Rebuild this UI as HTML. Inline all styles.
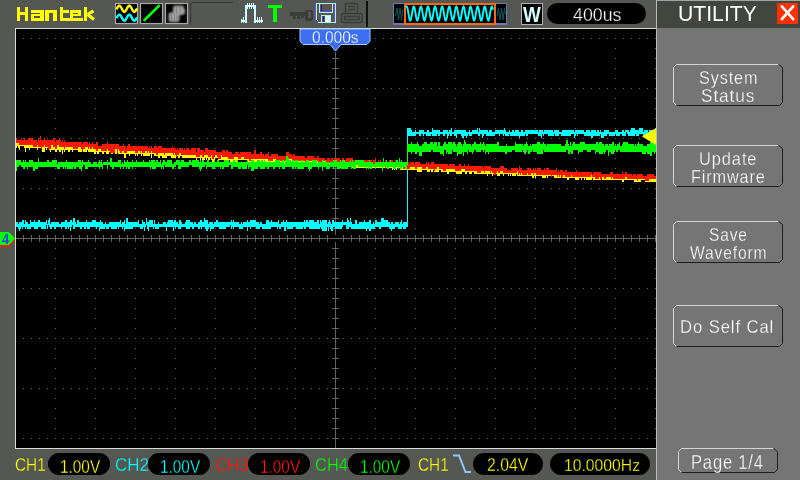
<!DOCTYPE html>
<html><head><meta charset="utf-8">
<style>
html,body{margin:0;padding:0}
body{width:800px;height:480px;overflow:hidden;position:relative;background:#555753;font-family:"Liberation Sans",sans-serif}
.a{position:absolute}
svg{position:absolute;left:0;top:0}
.pill{position:absolute;background:#000;border-radius:12px}
.lbl{position:absolute;font-size:15px;line-height:15px;white-space:nowrap}
.val{position:absolute;font-size:15px;line-height:15px;white-space:nowrap;text-align:center}
.btn{position:absolute;left:673px;width:110px;height:42px;box-sizing:border-box;border-top:1px solid #ccc;border-left:1px solid #ccc;border-right:2px solid #222;border-bottom:2px solid #222;border-radius:4px}
.t{position:absolute;line-height:1;white-space:nowrap;transform-origin:0 0}
</style></head><body>
<svg width="800" height="480" viewBox="0 0 800 480" shape-rendering="crispEdges"><defs><filter id="blur1" x="-50%" y="-50%" width="200%" height="200%"><feGaussianBlur stdDeviation="0.8"/></filter></defs>
<!-- screen -->
<rect x="16" y="29" width="640" height="419" fill="#000"/>
<rect x="15" y="28" width="641" height="1" fill="#d8d8d8"/>
<rect x="15" y="28" width="1" height="421" fill="#d8d8d8"/>
<rect x="15" y="448" width="641" height="1" fill="#d8d8d8"/>
<rect x="656" y="0" width="1" height="480" fill="#b8b8b8"/>
<!-- right panel -->
<rect x="657" y="0" width="143" height="28" fill="#42463f"/>
<rect x="657" y="28" width="143" height="452" fill="#757575"/>
<path fill="#686b68" d="M23 38h1v1h-1zM31 38h1v1h-1zM39 38h1v1h-1zM47 38h1v1h-1zM55 38h1v1h-1zM63 38h1v1h-1zM71 38h1v1h-1zM79 38h1v1h-1zM87 38h1v1h-1zM95 38h1v1h-1zM103 38h1v1h-1zM111 38h1v1h-1zM119 38h1v1h-1zM127 38h1v1h-1zM135 38h1v1h-1zM143 38h1v1h-1zM151 38h1v1h-1zM159 38h1v1h-1zM167 38h1v1h-1zM175 38h1v1h-1zM183 38h1v1h-1zM191 38h1v1h-1zM199 38h1v1h-1zM207 38h1v1h-1zM215 38h1v1h-1zM223 38h1v1h-1zM231 38h1v1h-1zM239 38h1v1h-1zM247 38h1v1h-1zM255 38h1v1h-1zM263 38h1v1h-1zM271 38h1v1h-1zM279 38h1v1h-1zM287 38h1v1h-1zM295 38h1v1h-1zM303 38h1v1h-1zM311 38h1v1h-1zM319 38h1v1h-1zM327 38h1v1h-1zM335 38h1v1h-1zM343 38h1v1h-1zM351 38h1v1h-1zM359 38h1v1h-1zM367 38h1v1h-1zM375 38h1v1h-1zM383 38h1v1h-1zM391 38h1v1h-1zM399 38h1v1h-1zM407 38h1v1h-1zM415 38h1v1h-1zM423 38h1v1h-1zM431 38h1v1h-1zM439 38h1v1h-1zM447 38h1v1h-1zM455 38h1v1h-1zM463 38h1v1h-1zM471 38h1v1h-1zM479 38h1v1h-1zM487 38h1v1h-1zM495 38h1v1h-1zM503 38h1v1h-1zM511 38h1v1h-1zM519 38h1v1h-1zM527 38h1v1h-1zM535 38h1v1h-1zM543 38h1v1h-1zM551 38h1v1h-1zM559 38h1v1h-1zM567 38h1v1h-1zM575 38h1v1h-1zM583 38h1v1h-1zM591 38h1v1h-1zM599 38h1v1h-1zM607 38h1v1h-1zM615 38h1v1h-1zM623 38h1v1h-1zM631 38h1v1h-1zM639 38h1v1h-1zM647 38h1v1h-1zM655 38h1v1h-1zM23 88h1v1h-1zM31 88h1v1h-1zM39 88h1v1h-1zM47 88h1v1h-1zM55 88h1v1h-1zM63 88h1v1h-1zM71 88h1v1h-1zM79 88h1v1h-1zM87 88h1v1h-1zM95 88h1v1h-1zM103 88h1v1h-1zM111 88h1v1h-1zM119 88h1v1h-1zM127 88h1v1h-1zM135 88h1v1h-1zM143 88h1v1h-1zM151 88h1v1h-1zM159 88h1v1h-1zM167 88h1v1h-1zM175 88h1v1h-1zM183 88h1v1h-1zM191 88h1v1h-1zM199 88h1v1h-1zM207 88h1v1h-1zM215 88h1v1h-1zM223 88h1v1h-1zM231 88h1v1h-1zM239 88h1v1h-1zM247 88h1v1h-1zM255 88h1v1h-1zM263 88h1v1h-1zM271 88h1v1h-1zM279 88h1v1h-1zM287 88h1v1h-1zM295 88h1v1h-1zM303 88h1v1h-1zM311 88h1v1h-1zM319 88h1v1h-1zM327 88h1v1h-1zM335 88h1v1h-1zM343 88h1v1h-1zM351 88h1v1h-1zM359 88h1v1h-1zM367 88h1v1h-1zM375 88h1v1h-1zM383 88h1v1h-1zM391 88h1v1h-1zM399 88h1v1h-1zM407 88h1v1h-1zM415 88h1v1h-1zM423 88h1v1h-1zM431 88h1v1h-1zM439 88h1v1h-1zM447 88h1v1h-1zM455 88h1v1h-1zM463 88h1v1h-1zM471 88h1v1h-1zM479 88h1v1h-1zM487 88h1v1h-1zM495 88h1v1h-1zM503 88h1v1h-1zM511 88h1v1h-1zM519 88h1v1h-1zM527 88h1v1h-1zM535 88h1v1h-1zM543 88h1v1h-1zM551 88h1v1h-1zM559 88h1v1h-1zM567 88h1v1h-1zM575 88h1v1h-1zM583 88h1v1h-1zM591 88h1v1h-1zM599 88h1v1h-1zM607 88h1v1h-1zM615 88h1v1h-1zM623 88h1v1h-1zM631 88h1v1h-1zM639 88h1v1h-1zM647 88h1v1h-1zM655 88h1v1h-1zM23 138h1v1h-1zM31 138h1v1h-1zM39 138h1v1h-1zM47 138h1v1h-1zM55 138h1v1h-1zM63 138h1v1h-1zM71 138h1v1h-1zM79 138h1v1h-1zM87 138h1v1h-1zM95 138h1v1h-1zM103 138h1v1h-1zM111 138h1v1h-1zM119 138h1v1h-1zM127 138h1v1h-1zM135 138h1v1h-1zM143 138h1v1h-1zM151 138h1v1h-1zM159 138h1v1h-1zM167 138h1v1h-1zM175 138h1v1h-1zM183 138h1v1h-1zM191 138h1v1h-1zM199 138h1v1h-1zM207 138h1v1h-1zM215 138h1v1h-1zM223 138h1v1h-1zM231 138h1v1h-1zM239 138h1v1h-1zM247 138h1v1h-1zM255 138h1v1h-1zM263 138h1v1h-1zM271 138h1v1h-1zM279 138h1v1h-1zM287 138h1v1h-1zM295 138h1v1h-1zM303 138h1v1h-1zM311 138h1v1h-1zM319 138h1v1h-1zM327 138h1v1h-1zM335 138h1v1h-1zM343 138h1v1h-1zM351 138h1v1h-1zM359 138h1v1h-1zM367 138h1v1h-1zM375 138h1v1h-1zM383 138h1v1h-1zM391 138h1v1h-1zM399 138h1v1h-1zM407 138h1v1h-1zM415 138h1v1h-1zM423 138h1v1h-1zM431 138h1v1h-1zM439 138h1v1h-1zM447 138h1v1h-1zM455 138h1v1h-1zM463 138h1v1h-1zM471 138h1v1h-1zM479 138h1v1h-1zM487 138h1v1h-1zM495 138h1v1h-1zM503 138h1v1h-1zM511 138h1v1h-1zM519 138h1v1h-1zM527 138h1v1h-1zM535 138h1v1h-1zM543 138h1v1h-1zM551 138h1v1h-1zM559 138h1v1h-1zM567 138h1v1h-1zM575 138h1v1h-1zM583 138h1v1h-1zM591 138h1v1h-1zM599 138h1v1h-1zM607 138h1v1h-1zM615 138h1v1h-1zM623 138h1v1h-1zM631 138h1v1h-1zM639 138h1v1h-1zM647 138h1v1h-1zM655 138h1v1h-1zM23 188h1v1h-1zM31 188h1v1h-1zM39 188h1v1h-1zM47 188h1v1h-1zM55 188h1v1h-1zM63 188h1v1h-1zM71 188h1v1h-1zM79 188h1v1h-1zM87 188h1v1h-1zM95 188h1v1h-1zM103 188h1v1h-1zM111 188h1v1h-1zM119 188h1v1h-1zM127 188h1v1h-1zM135 188h1v1h-1zM143 188h1v1h-1zM151 188h1v1h-1zM159 188h1v1h-1zM167 188h1v1h-1zM175 188h1v1h-1zM183 188h1v1h-1zM191 188h1v1h-1zM199 188h1v1h-1zM207 188h1v1h-1zM215 188h1v1h-1zM223 188h1v1h-1zM231 188h1v1h-1zM239 188h1v1h-1zM247 188h1v1h-1zM255 188h1v1h-1zM263 188h1v1h-1zM271 188h1v1h-1zM279 188h1v1h-1zM287 188h1v1h-1zM295 188h1v1h-1zM303 188h1v1h-1zM311 188h1v1h-1zM319 188h1v1h-1zM327 188h1v1h-1zM335 188h1v1h-1zM343 188h1v1h-1zM351 188h1v1h-1zM359 188h1v1h-1zM367 188h1v1h-1zM375 188h1v1h-1zM383 188h1v1h-1zM391 188h1v1h-1zM399 188h1v1h-1zM407 188h1v1h-1zM415 188h1v1h-1zM423 188h1v1h-1zM431 188h1v1h-1zM439 188h1v1h-1zM447 188h1v1h-1zM455 188h1v1h-1zM463 188h1v1h-1zM471 188h1v1h-1zM479 188h1v1h-1zM487 188h1v1h-1zM495 188h1v1h-1zM503 188h1v1h-1zM511 188h1v1h-1zM519 188h1v1h-1zM527 188h1v1h-1zM535 188h1v1h-1zM543 188h1v1h-1zM551 188h1v1h-1zM559 188h1v1h-1zM567 188h1v1h-1zM575 188h1v1h-1zM583 188h1v1h-1zM591 188h1v1h-1zM599 188h1v1h-1zM607 188h1v1h-1zM615 188h1v1h-1zM623 188h1v1h-1zM631 188h1v1h-1zM639 188h1v1h-1zM647 188h1v1h-1zM655 188h1v1h-1zM23 238h1v1h-1zM31 238h1v1h-1zM39 238h1v1h-1zM47 238h1v1h-1zM55 238h1v1h-1zM63 238h1v1h-1zM71 238h1v1h-1zM79 238h1v1h-1zM87 238h1v1h-1zM95 238h1v1h-1zM103 238h1v1h-1zM111 238h1v1h-1zM119 238h1v1h-1zM127 238h1v1h-1zM135 238h1v1h-1zM143 238h1v1h-1zM151 238h1v1h-1zM159 238h1v1h-1zM167 238h1v1h-1zM175 238h1v1h-1zM183 238h1v1h-1zM191 238h1v1h-1zM199 238h1v1h-1zM207 238h1v1h-1zM215 238h1v1h-1zM223 238h1v1h-1zM231 238h1v1h-1zM239 238h1v1h-1zM247 238h1v1h-1zM255 238h1v1h-1zM263 238h1v1h-1zM271 238h1v1h-1zM279 238h1v1h-1zM287 238h1v1h-1zM295 238h1v1h-1zM303 238h1v1h-1zM311 238h1v1h-1zM319 238h1v1h-1zM327 238h1v1h-1zM335 238h1v1h-1zM343 238h1v1h-1zM351 238h1v1h-1zM359 238h1v1h-1zM367 238h1v1h-1zM375 238h1v1h-1zM383 238h1v1h-1zM391 238h1v1h-1zM399 238h1v1h-1zM407 238h1v1h-1zM415 238h1v1h-1zM423 238h1v1h-1zM431 238h1v1h-1zM439 238h1v1h-1zM447 238h1v1h-1zM455 238h1v1h-1zM463 238h1v1h-1zM471 238h1v1h-1zM479 238h1v1h-1zM487 238h1v1h-1zM495 238h1v1h-1zM503 238h1v1h-1zM511 238h1v1h-1zM519 238h1v1h-1zM527 238h1v1h-1zM535 238h1v1h-1zM543 238h1v1h-1zM551 238h1v1h-1zM559 238h1v1h-1zM567 238h1v1h-1zM575 238h1v1h-1zM583 238h1v1h-1zM591 238h1v1h-1zM599 238h1v1h-1zM607 238h1v1h-1zM615 238h1v1h-1zM623 238h1v1h-1zM631 238h1v1h-1zM639 238h1v1h-1zM647 238h1v1h-1zM655 238h1v1h-1zM23 288h1v1h-1zM31 288h1v1h-1zM39 288h1v1h-1zM47 288h1v1h-1zM55 288h1v1h-1zM63 288h1v1h-1zM71 288h1v1h-1zM79 288h1v1h-1zM87 288h1v1h-1zM95 288h1v1h-1zM103 288h1v1h-1zM111 288h1v1h-1zM119 288h1v1h-1zM127 288h1v1h-1zM135 288h1v1h-1zM143 288h1v1h-1zM151 288h1v1h-1zM159 288h1v1h-1zM167 288h1v1h-1zM175 288h1v1h-1zM183 288h1v1h-1zM191 288h1v1h-1zM199 288h1v1h-1zM207 288h1v1h-1zM215 288h1v1h-1zM223 288h1v1h-1zM231 288h1v1h-1zM239 288h1v1h-1zM247 288h1v1h-1zM255 288h1v1h-1zM263 288h1v1h-1zM271 288h1v1h-1zM279 288h1v1h-1zM287 288h1v1h-1zM295 288h1v1h-1zM303 288h1v1h-1zM311 288h1v1h-1zM319 288h1v1h-1zM327 288h1v1h-1zM335 288h1v1h-1zM343 288h1v1h-1zM351 288h1v1h-1zM359 288h1v1h-1zM367 288h1v1h-1zM375 288h1v1h-1zM383 288h1v1h-1zM391 288h1v1h-1zM399 288h1v1h-1zM407 288h1v1h-1zM415 288h1v1h-1zM423 288h1v1h-1zM431 288h1v1h-1zM439 288h1v1h-1zM447 288h1v1h-1zM455 288h1v1h-1zM463 288h1v1h-1zM471 288h1v1h-1zM479 288h1v1h-1zM487 288h1v1h-1zM495 288h1v1h-1zM503 288h1v1h-1zM511 288h1v1h-1zM519 288h1v1h-1zM527 288h1v1h-1zM535 288h1v1h-1zM543 288h1v1h-1zM551 288h1v1h-1zM559 288h1v1h-1zM567 288h1v1h-1zM575 288h1v1h-1zM583 288h1v1h-1zM591 288h1v1h-1zM599 288h1v1h-1zM607 288h1v1h-1zM615 288h1v1h-1zM623 288h1v1h-1zM631 288h1v1h-1zM639 288h1v1h-1zM647 288h1v1h-1zM655 288h1v1h-1zM23 338h1v1h-1zM31 338h1v1h-1zM39 338h1v1h-1zM47 338h1v1h-1zM55 338h1v1h-1zM63 338h1v1h-1zM71 338h1v1h-1zM79 338h1v1h-1zM87 338h1v1h-1zM95 338h1v1h-1zM103 338h1v1h-1zM111 338h1v1h-1zM119 338h1v1h-1zM127 338h1v1h-1zM135 338h1v1h-1zM143 338h1v1h-1zM151 338h1v1h-1zM159 338h1v1h-1zM167 338h1v1h-1zM175 338h1v1h-1zM183 338h1v1h-1zM191 338h1v1h-1zM199 338h1v1h-1zM207 338h1v1h-1zM215 338h1v1h-1zM223 338h1v1h-1zM231 338h1v1h-1zM239 338h1v1h-1zM247 338h1v1h-1zM255 338h1v1h-1zM263 338h1v1h-1zM271 338h1v1h-1zM279 338h1v1h-1zM287 338h1v1h-1zM295 338h1v1h-1zM303 338h1v1h-1zM311 338h1v1h-1zM319 338h1v1h-1zM327 338h1v1h-1zM335 338h1v1h-1zM343 338h1v1h-1zM351 338h1v1h-1zM359 338h1v1h-1zM367 338h1v1h-1zM375 338h1v1h-1zM383 338h1v1h-1zM391 338h1v1h-1zM399 338h1v1h-1zM407 338h1v1h-1zM415 338h1v1h-1zM423 338h1v1h-1zM431 338h1v1h-1zM439 338h1v1h-1zM447 338h1v1h-1zM455 338h1v1h-1zM463 338h1v1h-1zM471 338h1v1h-1zM479 338h1v1h-1zM487 338h1v1h-1zM495 338h1v1h-1zM503 338h1v1h-1zM511 338h1v1h-1zM519 338h1v1h-1zM527 338h1v1h-1zM535 338h1v1h-1zM543 338h1v1h-1zM551 338h1v1h-1zM559 338h1v1h-1zM567 338h1v1h-1zM575 338h1v1h-1zM583 338h1v1h-1zM591 338h1v1h-1zM599 338h1v1h-1zM607 338h1v1h-1zM615 338h1v1h-1zM623 338h1v1h-1zM631 338h1v1h-1zM639 338h1v1h-1zM647 338h1v1h-1zM655 338h1v1h-1zM23 388h1v1h-1zM31 388h1v1h-1zM39 388h1v1h-1zM47 388h1v1h-1zM55 388h1v1h-1zM63 388h1v1h-1zM71 388h1v1h-1zM79 388h1v1h-1zM87 388h1v1h-1zM95 388h1v1h-1zM103 388h1v1h-1zM111 388h1v1h-1zM119 388h1v1h-1zM127 388h1v1h-1zM135 388h1v1h-1zM143 388h1v1h-1zM151 388h1v1h-1zM159 388h1v1h-1zM167 388h1v1h-1zM175 388h1v1h-1zM183 388h1v1h-1zM191 388h1v1h-1zM199 388h1v1h-1zM207 388h1v1h-1zM215 388h1v1h-1zM223 388h1v1h-1zM231 388h1v1h-1zM239 388h1v1h-1zM247 388h1v1h-1zM255 388h1v1h-1zM263 388h1v1h-1zM271 388h1v1h-1zM279 388h1v1h-1zM287 388h1v1h-1zM295 388h1v1h-1zM303 388h1v1h-1zM311 388h1v1h-1zM319 388h1v1h-1zM327 388h1v1h-1zM335 388h1v1h-1zM343 388h1v1h-1zM351 388h1v1h-1zM359 388h1v1h-1zM367 388h1v1h-1zM375 388h1v1h-1zM383 388h1v1h-1zM391 388h1v1h-1zM399 388h1v1h-1zM407 388h1v1h-1zM415 388h1v1h-1zM423 388h1v1h-1zM431 388h1v1h-1zM439 388h1v1h-1zM447 388h1v1h-1zM455 388h1v1h-1zM463 388h1v1h-1zM471 388h1v1h-1zM479 388h1v1h-1zM487 388h1v1h-1zM495 388h1v1h-1zM503 388h1v1h-1zM511 388h1v1h-1zM519 388h1v1h-1zM527 388h1v1h-1zM535 388h1v1h-1zM543 388h1v1h-1zM551 388h1v1h-1zM559 388h1v1h-1zM567 388h1v1h-1zM575 388h1v1h-1zM583 388h1v1h-1zM591 388h1v1h-1zM599 388h1v1h-1zM607 388h1v1h-1zM615 388h1v1h-1zM623 388h1v1h-1zM631 388h1v1h-1zM639 388h1v1h-1zM647 388h1v1h-1zM655 388h1v1h-1zM23 438h1v1h-1zM31 438h1v1h-1zM39 438h1v1h-1zM47 438h1v1h-1zM55 438h1v1h-1zM63 438h1v1h-1zM71 438h1v1h-1zM79 438h1v1h-1zM87 438h1v1h-1zM95 438h1v1h-1zM103 438h1v1h-1zM111 438h1v1h-1zM119 438h1v1h-1zM127 438h1v1h-1zM135 438h1v1h-1zM143 438h1v1h-1zM151 438h1v1h-1zM159 438h1v1h-1zM167 438h1v1h-1zM175 438h1v1h-1zM183 438h1v1h-1zM191 438h1v1h-1zM199 438h1v1h-1zM207 438h1v1h-1zM215 438h1v1h-1zM223 438h1v1h-1zM231 438h1v1h-1zM239 438h1v1h-1zM247 438h1v1h-1zM255 438h1v1h-1zM263 438h1v1h-1zM271 438h1v1h-1zM279 438h1v1h-1zM287 438h1v1h-1zM295 438h1v1h-1zM303 438h1v1h-1zM311 438h1v1h-1zM319 438h1v1h-1zM327 438h1v1h-1zM335 438h1v1h-1zM343 438h1v1h-1zM351 438h1v1h-1zM359 438h1v1h-1zM367 438h1v1h-1zM375 438h1v1h-1zM383 438h1v1h-1zM391 438h1v1h-1zM399 438h1v1h-1zM407 438h1v1h-1zM415 438h1v1h-1zM423 438h1v1h-1zM431 438h1v1h-1zM439 438h1v1h-1zM447 438h1v1h-1zM455 438h1v1h-1zM463 438h1v1h-1zM471 438h1v1h-1zM479 438h1v1h-1zM487 438h1v1h-1zM495 438h1v1h-1zM503 438h1v1h-1zM511 438h1v1h-1zM519 438h1v1h-1zM527 438h1v1h-1zM535 438h1v1h-1zM543 438h1v1h-1zM551 438h1v1h-1zM559 438h1v1h-1zM567 438h1v1h-1zM575 438h1v1h-1zM583 438h1v1h-1zM591 438h1v1h-1zM599 438h1v1h-1zM607 438h1v1h-1zM615 438h1v1h-1zM623 438h1v1h-1zM631 438h1v1h-1zM639 438h1v1h-1zM647 438h1v1h-1zM655 438h1v1h-1zM55 48h1v1h-1zM55 58h1v1h-1zM55 68h1v1h-1zM55 78h1v1h-1zM55 98h1v1h-1zM55 108h1v1h-1zM55 118h1v1h-1zM55 128h1v1h-1zM55 148h1v1h-1zM55 158h1v1h-1zM55 168h1v1h-1zM55 178h1v1h-1zM55 198h1v1h-1zM55 208h1v1h-1zM55 218h1v1h-1zM55 228h1v1h-1zM55 248h1v1h-1zM55 258h1v1h-1zM55 268h1v1h-1zM55 278h1v1h-1zM55 298h1v1h-1zM55 308h1v1h-1zM55 318h1v1h-1zM55 328h1v1h-1zM55 348h1v1h-1zM55 358h1v1h-1zM55 368h1v1h-1zM55 378h1v1h-1zM55 398h1v1h-1zM55 408h1v1h-1zM55 418h1v1h-1zM55 428h1v1h-1zM95 48h1v1h-1zM95 58h1v1h-1zM95 68h1v1h-1zM95 78h1v1h-1zM95 98h1v1h-1zM95 108h1v1h-1zM95 118h1v1h-1zM95 128h1v1h-1zM95 148h1v1h-1zM95 158h1v1h-1zM95 168h1v1h-1zM95 178h1v1h-1zM95 198h1v1h-1zM95 208h1v1h-1zM95 218h1v1h-1zM95 228h1v1h-1zM95 248h1v1h-1zM95 258h1v1h-1zM95 268h1v1h-1zM95 278h1v1h-1zM95 298h1v1h-1zM95 308h1v1h-1zM95 318h1v1h-1zM95 328h1v1h-1zM95 348h1v1h-1zM95 358h1v1h-1zM95 368h1v1h-1zM95 378h1v1h-1zM95 398h1v1h-1zM95 408h1v1h-1zM95 418h1v1h-1zM95 428h1v1h-1zM135 48h1v1h-1zM135 58h1v1h-1zM135 68h1v1h-1zM135 78h1v1h-1zM135 98h1v1h-1zM135 108h1v1h-1zM135 118h1v1h-1zM135 128h1v1h-1zM135 148h1v1h-1zM135 158h1v1h-1zM135 168h1v1h-1zM135 178h1v1h-1zM135 198h1v1h-1zM135 208h1v1h-1zM135 218h1v1h-1zM135 228h1v1h-1zM135 248h1v1h-1zM135 258h1v1h-1zM135 268h1v1h-1zM135 278h1v1h-1zM135 298h1v1h-1zM135 308h1v1h-1zM135 318h1v1h-1zM135 328h1v1h-1zM135 348h1v1h-1zM135 358h1v1h-1zM135 368h1v1h-1zM135 378h1v1h-1zM135 398h1v1h-1zM135 408h1v1h-1zM135 418h1v1h-1zM135 428h1v1h-1zM175 48h1v1h-1zM175 58h1v1h-1zM175 68h1v1h-1zM175 78h1v1h-1zM175 98h1v1h-1zM175 108h1v1h-1zM175 118h1v1h-1zM175 128h1v1h-1zM175 148h1v1h-1zM175 158h1v1h-1zM175 168h1v1h-1zM175 178h1v1h-1zM175 198h1v1h-1zM175 208h1v1h-1zM175 218h1v1h-1zM175 228h1v1h-1zM175 248h1v1h-1zM175 258h1v1h-1zM175 268h1v1h-1zM175 278h1v1h-1zM175 298h1v1h-1zM175 308h1v1h-1zM175 318h1v1h-1zM175 328h1v1h-1zM175 348h1v1h-1zM175 358h1v1h-1zM175 368h1v1h-1zM175 378h1v1h-1zM175 398h1v1h-1zM175 408h1v1h-1zM175 418h1v1h-1zM175 428h1v1h-1zM215 48h1v1h-1zM215 58h1v1h-1zM215 68h1v1h-1zM215 78h1v1h-1zM215 98h1v1h-1zM215 108h1v1h-1zM215 118h1v1h-1zM215 128h1v1h-1zM215 148h1v1h-1zM215 158h1v1h-1zM215 168h1v1h-1zM215 178h1v1h-1zM215 198h1v1h-1zM215 208h1v1h-1zM215 218h1v1h-1zM215 228h1v1h-1zM215 248h1v1h-1zM215 258h1v1h-1zM215 268h1v1h-1zM215 278h1v1h-1zM215 298h1v1h-1zM215 308h1v1h-1zM215 318h1v1h-1zM215 328h1v1h-1zM215 348h1v1h-1zM215 358h1v1h-1zM215 368h1v1h-1zM215 378h1v1h-1zM215 398h1v1h-1zM215 408h1v1h-1zM215 418h1v1h-1zM215 428h1v1h-1zM255 48h1v1h-1zM255 58h1v1h-1zM255 68h1v1h-1zM255 78h1v1h-1zM255 98h1v1h-1zM255 108h1v1h-1zM255 118h1v1h-1zM255 128h1v1h-1zM255 148h1v1h-1zM255 158h1v1h-1zM255 168h1v1h-1zM255 178h1v1h-1zM255 198h1v1h-1zM255 208h1v1h-1zM255 218h1v1h-1zM255 228h1v1h-1zM255 248h1v1h-1zM255 258h1v1h-1zM255 268h1v1h-1zM255 278h1v1h-1zM255 298h1v1h-1zM255 308h1v1h-1zM255 318h1v1h-1zM255 328h1v1h-1zM255 348h1v1h-1zM255 358h1v1h-1zM255 368h1v1h-1zM255 378h1v1h-1zM255 398h1v1h-1zM255 408h1v1h-1zM255 418h1v1h-1zM255 428h1v1h-1zM295 48h1v1h-1zM295 58h1v1h-1zM295 68h1v1h-1zM295 78h1v1h-1zM295 98h1v1h-1zM295 108h1v1h-1zM295 118h1v1h-1zM295 128h1v1h-1zM295 148h1v1h-1zM295 158h1v1h-1zM295 168h1v1h-1zM295 178h1v1h-1zM295 198h1v1h-1zM295 208h1v1h-1zM295 218h1v1h-1zM295 228h1v1h-1zM295 248h1v1h-1zM295 258h1v1h-1zM295 268h1v1h-1zM295 278h1v1h-1zM295 298h1v1h-1zM295 308h1v1h-1zM295 318h1v1h-1zM295 328h1v1h-1zM295 348h1v1h-1zM295 358h1v1h-1zM295 368h1v1h-1zM295 378h1v1h-1zM295 398h1v1h-1zM295 408h1v1h-1zM295 418h1v1h-1zM295 428h1v1h-1zM335 48h1v1h-1zM335 58h1v1h-1zM335 68h1v1h-1zM335 78h1v1h-1zM335 98h1v1h-1zM335 108h1v1h-1zM335 118h1v1h-1zM335 128h1v1h-1zM335 148h1v1h-1zM335 158h1v1h-1zM335 168h1v1h-1zM335 178h1v1h-1zM335 198h1v1h-1zM335 208h1v1h-1zM335 218h1v1h-1zM335 228h1v1h-1zM335 248h1v1h-1zM335 258h1v1h-1zM335 268h1v1h-1zM335 278h1v1h-1zM335 298h1v1h-1zM335 308h1v1h-1zM335 318h1v1h-1zM335 328h1v1h-1zM335 348h1v1h-1zM335 358h1v1h-1zM335 368h1v1h-1zM335 378h1v1h-1zM335 398h1v1h-1zM335 408h1v1h-1zM335 418h1v1h-1zM335 428h1v1h-1zM375 48h1v1h-1zM375 58h1v1h-1zM375 68h1v1h-1zM375 78h1v1h-1zM375 98h1v1h-1zM375 108h1v1h-1zM375 118h1v1h-1zM375 128h1v1h-1zM375 148h1v1h-1zM375 158h1v1h-1zM375 168h1v1h-1zM375 178h1v1h-1zM375 198h1v1h-1zM375 208h1v1h-1zM375 218h1v1h-1zM375 228h1v1h-1zM375 248h1v1h-1zM375 258h1v1h-1zM375 268h1v1h-1zM375 278h1v1h-1zM375 298h1v1h-1zM375 308h1v1h-1zM375 318h1v1h-1zM375 328h1v1h-1zM375 348h1v1h-1zM375 358h1v1h-1zM375 368h1v1h-1zM375 378h1v1h-1zM375 398h1v1h-1zM375 408h1v1h-1zM375 418h1v1h-1zM375 428h1v1h-1zM415 48h1v1h-1zM415 58h1v1h-1zM415 68h1v1h-1zM415 78h1v1h-1zM415 98h1v1h-1zM415 108h1v1h-1zM415 118h1v1h-1zM415 128h1v1h-1zM415 148h1v1h-1zM415 158h1v1h-1zM415 168h1v1h-1zM415 178h1v1h-1zM415 198h1v1h-1zM415 208h1v1h-1zM415 218h1v1h-1zM415 228h1v1h-1zM415 248h1v1h-1zM415 258h1v1h-1zM415 268h1v1h-1zM415 278h1v1h-1zM415 298h1v1h-1zM415 308h1v1h-1zM415 318h1v1h-1zM415 328h1v1h-1zM415 348h1v1h-1zM415 358h1v1h-1zM415 368h1v1h-1zM415 378h1v1h-1zM415 398h1v1h-1zM415 408h1v1h-1zM415 418h1v1h-1zM415 428h1v1h-1zM455 48h1v1h-1zM455 58h1v1h-1zM455 68h1v1h-1zM455 78h1v1h-1zM455 98h1v1h-1zM455 108h1v1h-1zM455 118h1v1h-1zM455 128h1v1h-1zM455 148h1v1h-1zM455 158h1v1h-1zM455 168h1v1h-1zM455 178h1v1h-1zM455 198h1v1h-1zM455 208h1v1h-1zM455 218h1v1h-1zM455 228h1v1h-1zM455 248h1v1h-1zM455 258h1v1h-1zM455 268h1v1h-1zM455 278h1v1h-1zM455 298h1v1h-1zM455 308h1v1h-1zM455 318h1v1h-1zM455 328h1v1h-1zM455 348h1v1h-1zM455 358h1v1h-1zM455 368h1v1h-1zM455 378h1v1h-1zM455 398h1v1h-1zM455 408h1v1h-1zM455 418h1v1h-1zM455 428h1v1h-1zM495 48h1v1h-1zM495 58h1v1h-1zM495 68h1v1h-1zM495 78h1v1h-1zM495 98h1v1h-1zM495 108h1v1h-1zM495 118h1v1h-1zM495 128h1v1h-1zM495 148h1v1h-1zM495 158h1v1h-1zM495 168h1v1h-1zM495 178h1v1h-1zM495 198h1v1h-1zM495 208h1v1h-1zM495 218h1v1h-1zM495 228h1v1h-1zM495 248h1v1h-1zM495 258h1v1h-1zM495 268h1v1h-1zM495 278h1v1h-1zM495 298h1v1h-1zM495 308h1v1h-1zM495 318h1v1h-1zM495 328h1v1h-1zM495 348h1v1h-1zM495 358h1v1h-1zM495 368h1v1h-1zM495 378h1v1h-1zM495 398h1v1h-1zM495 408h1v1h-1zM495 418h1v1h-1zM495 428h1v1h-1zM535 48h1v1h-1zM535 58h1v1h-1zM535 68h1v1h-1zM535 78h1v1h-1zM535 98h1v1h-1zM535 108h1v1h-1zM535 118h1v1h-1zM535 128h1v1h-1zM535 148h1v1h-1zM535 158h1v1h-1zM535 168h1v1h-1zM535 178h1v1h-1zM535 198h1v1h-1zM535 208h1v1h-1zM535 218h1v1h-1zM535 228h1v1h-1zM535 248h1v1h-1zM535 258h1v1h-1zM535 268h1v1h-1zM535 278h1v1h-1zM535 298h1v1h-1zM535 308h1v1h-1zM535 318h1v1h-1zM535 328h1v1h-1zM535 348h1v1h-1zM535 358h1v1h-1zM535 368h1v1h-1zM535 378h1v1h-1zM535 398h1v1h-1zM535 408h1v1h-1zM535 418h1v1h-1zM535 428h1v1h-1zM575 48h1v1h-1zM575 58h1v1h-1zM575 68h1v1h-1zM575 78h1v1h-1zM575 98h1v1h-1zM575 108h1v1h-1zM575 118h1v1h-1zM575 128h1v1h-1zM575 148h1v1h-1zM575 158h1v1h-1zM575 168h1v1h-1zM575 178h1v1h-1zM575 198h1v1h-1zM575 208h1v1h-1zM575 218h1v1h-1zM575 228h1v1h-1zM575 248h1v1h-1zM575 258h1v1h-1zM575 268h1v1h-1zM575 278h1v1h-1zM575 298h1v1h-1zM575 308h1v1h-1zM575 318h1v1h-1zM575 328h1v1h-1zM575 348h1v1h-1zM575 358h1v1h-1zM575 368h1v1h-1zM575 378h1v1h-1zM575 398h1v1h-1zM575 408h1v1h-1zM575 418h1v1h-1zM575 428h1v1h-1zM615 48h1v1h-1zM615 58h1v1h-1zM615 68h1v1h-1zM615 78h1v1h-1zM615 98h1v1h-1zM615 108h1v1h-1zM615 118h1v1h-1zM615 128h1v1h-1zM615 148h1v1h-1zM615 158h1v1h-1zM615 168h1v1h-1zM615 178h1v1h-1zM615 198h1v1h-1zM615 208h1v1h-1zM615 218h1v1h-1zM615 228h1v1h-1zM615 248h1v1h-1zM615 258h1v1h-1zM615 268h1v1h-1zM615 278h1v1h-1zM615 298h1v1h-1zM615 308h1v1h-1zM615 318h1v1h-1zM615 328h1v1h-1zM615 348h1v1h-1zM615 358h1v1h-1zM615 368h1v1h-1zM615 378h1v1h-1zM615 398h1v1h-1zM615 408h1v1h-1zM615 418h1v1h-1zM615 428h1v1h-1zM655 48h1v1h-1zM655 58h1v1h-1zM655 68h1v1h-1zM655 78h1v1h-1zM655 98h1v1h-1zM655 108h1v1h-1zM655 118h1v1h-1zM655 128h1v1h-1zM655 148h1v1h-1zM655 158h1v1h-1zM655 168h1v1h-1zM655 178h1v1h-1zM655 198h1v1h-1zM655 208h1v1h-1zM655 218h1v1h-1zM655 228h1v1h-1zM655 248h1v1h-1zM655 258h1v1h-1zM655 268h1v1h-1zM655 278h1v1h-1zM655 298h1v1h-1zM655 308h1v1h-1zM655 318h1v1h-1zM655 328h1v1h-1zM655 348h1v1h-1zM655 358h1v1h-1zM655 368h1v1h-1zM655 378h1v1h-1zM655 398h1v1h-1zM655 408h1v1h-1zM655 418h1v1h-1zM655 428h1v1h-1z"/>
<path fill="#5f645f" d="M16 238h640v1h-640zM335 52v396h1v-396zM23 235h1v7h-1zM31 235h1v7h-1zM39 235h1v7h-1zM47 235h1v7h-1zM55 235h1v7h-1zM63 235h1v7h-1zM71 235h1v7h-1zM79 235h1v7h-1zM87 235h1v7h-1zM95 235h1v7h-1zM103 235h1v7h-1zM111 235h1v7h-1zM119 235h1v7h-1zM127 235h1v7h-1zM135 235h1v7h-1zM143 235h1v7h-1zM151 235h1v7h-1zM159 235h1v7h-1zM167 235h1v7h-1zM175 235h1v7h-1zM183 235h1v7h-1zM191 235h1v7h-1zM199 235h1v7h-1zM207 235h1v7h-1zM215 235h1v7h-1zM223 235h1v7h-1zM231 235h1v7h-1zM239 235h1v7h-1zM247 235h1v7h-1zM255 235h1v7h-1zM263 235h1v7h-1zM271 235h1v7h-1zM279 235h1v7h-1zM287 235h1v7h-1zM295 235h1v7h-1zM303 235h1v7h-1zM311 235h1v7h-1zM319 235h1v7h-1zM327 235h1v7h-1zM335 235h1v7h-1zM343 235h1v7h-1zM351 235h1v7h-1zM359 235h1v7h-1zM367 235h1v7h-1zM375 235h1v7h-1zM383 235h1v7h-1zM391 235h1v7h-1zM399 235h1v7h-1zM407 235h1v7h-1zM415 235h1v7h-1zM423 235h1v7h-1zM431 235h1v7h-1zM439 235h1v7h-1zM447 235h1v7h-1zM455 235h1v7h-1zM463 235h1v7h-1zM471 235h1v7h-1zM479 235h1v7h-1zM487 235h1v7h-1zM495 235h1v7h-1zM503 235h1v7h-1zM511 235h1v7h-1zM519 235h1v7h-1zM527 235h1v7h-1zM535 235h1v7h-1zM543 235h1v7h-1zM551 235h1v7h-1zM559 235h1v7h-1zM567 235h1v7h-1zM575 235h1v7h-1zM583 235h1v7h-1zM591 235h1v7h-1zM599 235h1v7h-1zM607 235h1v7h-1zM615 235h1v7h-1zM623 235h1v7h-1zM631 235h1v7h-1zM639 235h1v7h-1zM647 235h1v7h-1zM655 235h1v7h-1zM332 58h7v1h-7zM332 68h7v1h-7zM332 78h7v1h-7zM332 88h7v1h-7zM332 98h7v1h-7zM332 108h7v1h-7zM332 118h7v1h-7zM332 128h7v1h-7zM332 138h7v1h-7zM332 148h7v1h-7zM332 158h7v1h-7zM332 168h7v1h-7zM332 178h7v1h-7zM332 188h7v1h-7zM332 198h7v1h-7zM332 208h7v1h-7zM332 218h7v1h-7zM332 228h7v1h-7zM332 238h7v1h-7zM332 248h7v1h-7zM332 258h7v1h-7zM332 268h7v1h-7zM332 278h7v1h-7zM332 288h7v1h-7zM332 298h7v1h-7zM332 308h7v1h-7zM332 318h7v1h-7zM332 328h7v1h-7zM332 338h7v1h-7zM332 348h7v1h-7zM332 358h7v1h-7zM332 368h7v1h-7zM332 378h7v1h-7zM332 388h7v1h-7zM332 398h7v1h-7zM332 408h7v1h-7zM332 418h7v1h-7zM332 428h7v1h-7zM332 438h7v1h-7z"/>
<path fill="#ffff00" d="M16 141h1v7h-1zM17 141h1v5h-1zM18 141h1v7h-1zM19 141h1v9h-1zM20 141h1v5h-1zM21 141h1v5h-1zM22 141h1v5h-1zM23 142h1v4h-1zM24 142h1v6h-1zM25 142h1v10h-1zM26 142h1v6h-1zM27 142h1v6h-1zM28 142h1v6h-1zM29 142h1v8h-1zM30 142h1v6h-1zM31 142h1v6h-1zM32 142h1v6h-1zM33 142h1v6h-1zM34 142h1v6h-1zM35 142h1v6h-1zM36 142h1v6h-1zM37 142h1v8h-1zM38 143h1v5h-1zM39 143h1v5h-1zM40 143h1v5h-1zM41 143h1v5h-1zM42 143h1v9h-1zM43 143h1v9h-1zM44 143h1v9h-1zM45 143h1v5h-1zM46 143h1v7h-1zM47 143h1v5h-1zM48 143h1v5h-1zM49 143h1v7h-1zM50 143h1v9h-1zM51 143h1v7h-1zM52 143h1v7h-1zM53 144h1v6h-1zM54 144h1v6h-1zM55 144h1v8h-1zM56 144h1v8h-1zM57 144h1v6h-1zM58 144h1v6h-1zM59 144h1v8h-1zM60 144h1v8h-1zM61 144h1v6h-1zM62 144h1v10h-1zM63 144h1v6h-1zM64 144h1v8h-1zM65 144h1v6h-1zM66 144h1v6h-1zM67 144h1v6h-1zM68 144h1v8h-1zM69 144h1v8h-1zM70 145h1v5h-1zM71 145h1v5h-1zM72 145h1v7h-1zM73 145h1v5h-1zM74 144h1v6h-1zM75 145h1v5h-1zM76 144h1v6h-1zM77 145h1v5h-1zM78 145h1v7h-1zM79 145h1v7h-1zM80 145h1v7h-1zM81 145h1v7h-1zM82 145h1v5h-1zM83 145h1v7h-1zM84 146h1v6h-1zM85 146h1v6h-1zM86 146h1v6h-1zM87 146h1v4h-1zM88 146h1v6h-1zM89 146h1v6h-1zM90 146h1v6h-1zM91 146h1v6h-1zM92 146h1v6h-1zM93 146h1v6h-1zM94 146h1v8h-1zM95 146h1v8h-1zM96 146h1v6h-1zM97 146h1v8h-1zM98 146h1v8h-1zM99 147h1v5h-1zM100 147h1v5h-1zM101 146h1v6h-1zM102 147h1v7h-1zM103 147h1v7h-1zM104 147h1v5h-1zM105 147h1v5h-1zM106 147h1v7h-1zM107 147h1v7h-1zM108 147h1v7h-1zM109 147h1v5h-1zM110 147h1v5h-1zM111 147h1v7h-1zM112 147h1v7h-1zM113 147h1v5h-1zM114 147h1v5h-1zM115 148h1v6h-1zM116 148h1v6h-1zM117 148h1v4h-1zM118 148h1v6h-1zM119 148h1v6h-1zM120 148h1v6h-1zM121 148h1v6h-1zM122 148h1v6h-1zM123 148h1v6h-1zM124 148h1v10h-1zM125 148h1v10h-1zM126 148h1v6h-1zM127 148h1v6h-1zM128 148h1v6h-1zM129 148h1v8h-1zM130 148h1v6h-1zM131 149h1v5h-1zM132 149h1v5h-1zM133 149h1v5h-1zM134 149h1v5h-1zM135 149h1v7h-1zM136 149h1v5h-1zM137 149h1v7h-1zM138 149h1v5h-1zM139 149h1v5h-1zM140 149h1v5h-1zM141 149h1v7h-1zM142 149h1v5h-1zM143 149h1v7h-1zM144 149h1v7h-1zM145 149h1v7h-1zM146 149h1v7h-1zM147 150h1v6h-1zM148 150h1v6h-1zM149 150h1v6h-1zM150 150h1v4h-1zM151 148h1v10h-1zM152 150h1v4h-1zM153 150h1v4h-1zM154 150h1v6h-1zM155 150h1v6h-1zM156 150h1v6h-1zM157 150h1v6h-1zM158 150h1v8h-1zM159 150h1v8h-1zM160 150h1v6h-1zM161 150h1v6h-1zM162 151h1v7h-1zM163 151h1v7h-1zM164 151h1v7h-1zM165 151h1v7h-1zM166 151h1v7h-1zM167 151h1v5h-1zM168 150h1v6h-1zM169 150h1v6h-1zM170 150h1v6h-1zM171 151h1v7h-1zM172 151h1v7h-1zM173 151h1v7h-1zM174 151h1v7h-1zM175 151h1v7h-1zM176 151h1v5h-1zM177 151h1v5h-1zM178 151h1v7h-1zM179 152h1v6h-1zM180 152h1v4h-1zM181 152h1v4h-1zM182 152h1v6h-1zM183 152h1v6h-1zM184 152h1v6h-1zM185 152h1v6h-1zM186 152h1v6h-1zM187 152h1v6h-1zM188 152h1v6h-1zM189 152h1v6h-1zM190 152h1v6h-1zM191 152h1v6h-1zM192 152h1v6h-1zM193 152h1v6h-1zM194 152h1v6h-1zM195 153h1v5h-1zM196 153h1v7h-1zM197 152h1v6h-1zM198 153h1v5h-1zM199 153h1v5h-1zM200 153h1v7h-1zM201 153h1v5h-1zM202 153h1v7h-1zM203 153h1v7h-1zM204 153h1v7h-1zM205 153h1v5h-1zM206 153h1v7h-1zM207 153h1v5h-1zM208 153h1v7h-1zM209 153h1v7h-1zM210 153h1v5h-1zM211 154h1v6h-1zM212 154h1v8h-1zM213 154h1v8h-1zM214 154h1v6h-1zM215 154h1v4h-1zM216 154h1v4h-1zM217 154h1v4h-1zM218 154h1v6h-1zM219 154h1v6h-1zM220 154h1v6h-1zM221 154h1v6h-1zM222 154h1v6h-1zM223 154h1v6h-1zM224 154h1v8h-1zM225 154h1v6h-1zM226 154h1v6h-1zM227 154h1v6h-1zM228 155h1v5h-1zM229 155h1v5h-1zM230 155h1v7h-1zM231 155h1v7h-1zM232 155h1v7h-1zM233 154h1v6h-1zM234 154h1v6h-1zM235 155h1v7h-1zM236 155h1v7h-1zM237 155h1v5h-1zM238 155h1v5h-1zM239 155h1v5h-1zM240 155h1v5h-1zM241 155h1v5h-1zM242 154h1v6h-1zM243 154h1v6h-1zM244 156h1v4h-1zM245 156h1v4h-1zM246 156h1v4h-1zM247 156h1v6h-1zM248 156h1v6h-1zM249 156h1v6h-1zM250 156h1v6h-1zM251 156h1v6h-1zM252 156h1v6h-1zM253 156h1v6h-1zM254 156h1v6h-1zM255 156h1v6h-1zM256 156h1v6h-1zM257 156h1v6h-1zM258 156h1v6h-1zM259 156h1v6h-1zM260 156h1v6h-1zM261 156h1v6h-1zM262 157h1v5h-1zM263 157h1v5h-1zM264 157h1v5h-1zM265 157h1v5h-1zM266 157h1v7h-1zM267 157h1v7h-1zM268 157h1v5h-1zM269 157h1v5h-1zM270 157h1v5h-1zM271 157h1v7h-1zM272 157h1v5h-1zM273 157h1v5h-1zM274 157h1v5h-1zM275 157h1v7h-1zM276 157h1v7h-1zM277 157h1v7h-1zM278 158h1v4h-1zM279 158h1v6h-1zM280 158h1v4h-1zM281 158h1v6h-1zM282 158h1v4h-1zM283 158h1v4h-1zM284 158h1v6h-1zM285 158h1v6h-1zM286 158h1v6h-1zM287 158h1v6h-1zM288 158h1v6h-1zM289 158h1v6h-1zM290 158h1v6h-1zM291 158h1v6h-1zM292 158h1v6h-1zM293 158h1v6h-1zM294 158h1v6h-1zM295 159h1v5h-1zM296 159h1v7h-1zM297 159h1v7h-1zM298 159h1v7h-1zM299 159h1v7h-1zM300 159h1v7h-1zM301 159h1v7h-1zM302 159h1v7h-1zM303 159h1v7h-1zM304 159h1v7h-1zM305 159h1v5h-1zM306 159h1v5h-1zM307 159h1v7h-1zM308 159h1v5h-1zM309 159h1v5h-1zM310 159h1v5h-1zM311 159h1v5h-1zM312 160h1v4h-1zM313 160h1v4h-1zM314 160h1v4h-1zM315 160h1v4h-1zM316 160h1v4h-1zM317 160h1v6h-1zM318 160h1v6h-1zM319 160h1v6h-1zM320 160h1v6h-1zM321 160h1v6h-1zM322 160h1v6h-1zM323 160h1v6h-1zM324 160h1v4h-1zM325 160h1v6h-1zM326 160h1v6h-1zM327 160h1v6h-1zM328 160h1v4h-1zM329 161h1v3h-1zM330 161h1v3h-1zM331 161h1v3h-1zM332 161h1v3h-1zM333 161h1v3h-1zM334 161h1v5h-1zM335 161h1v5h-1zM336 161h1v5h-1zM337 160h1v6h-1zM338 160h1v6h-1zM339 161h1v7h-1zM340 161h1v7h-1zM341 161h1v5h-1zM342 161h1v5h-1zM343 161h1v5h-1zM344 161h1v5h-1zM345 161h1v5h-1zM346 161h1v5h-1zM347 162h1v4h-1zM348 162h1v4h-1zM349 162h1v4h-1zM350 162h1v4h-1zM351 162h1v4h-1zM352 162h1v6h-1zM353 162h1v6h-1zM354 162h1v6h-1zM355 162h1v6h-1zM356 162h1v6h-1zM357 162h1v6h-1zM358 162h1v6h-1zM359 162h1v6h-1zM360 162h1v6h-1zM361 162h1v6h-1zM362 162h1v6h-1zM363 162h1v6h-1zM364 163h1v5h-1zM365 163h1v5h-1zM366 163h1v5h-1zM367 163h1v5h-1zM368 163h1v5h-1zM369 163h1v5h-1zM370 163h1v5h-1zM371 163h1v5h-1zM372 163h1v5h-1zM373 163h1v5h-1zM374 163h1v5h-1zM375 163h1v5h-1zM376 163h1v5h-1zM377 163h1v5h-1zM378 163h1v5h-1zM379 163h1v5h-1zM380 163h1v5h-1zM381 163h1v5h-1zM382 164h1v4h-1zM383 164h1v4h-1zM384 164h1v4h-1zM385 164h1v4h-1zM386 164h1v4h-1zM387 164h1v4h-1zM388 164h1v4h-1zM389 164h1v4h-1zM390 164h1v4h-1zM391 164h1v4h-1zM392 164h1v6h-1zM393 164h1v4h-1zM394 164h1v6h-1zM395 164h1v4h-1zM396 164h1v6h-1zM397 164h1v4h-1zM398 164h1v4h-1zM399 164h1v4h-1zM400 165h1v5h-1zM401 165h1v5h-1zM402 165h1v5h-1zM403 165h1v5h-1zM404 165h1v5h-1zM405 165h1v5h-1zM406 165h1v5h-1zM407 165h1v5h-1zM408 165h1v5h-1zM409 165h1v5h-1zM410 165h1v5h-1zM411 165h1v5h-1zM412 165h1v5h-1zM413 165h1v5h-1zM414 165h1v5h-1zM415 165h1v5h-1zM416 165h1v5h-1zM417 165h1v7h-1zM418 166h1v6h-1zM419 166h1v6h-1zM420 166h1v6h-1zM421 166h1v6h-1zM422 166h1v4h-1zM423 166h1v4h-1zM424 166h1v4h-1zM425 166h1v4h-1zM426 166h1v4h-1zM427 166h1v6h-1zM428 166h1v6h-1zM429 166h1v6h-1zM430 166h1v4h-1zM431 166h1v6h-1zM432 166h1v6h-1zM433 166h1v4h-1zM434 166h1v6h-1zM435 166h1v6h-1zM436 167h1v5h-1zM437 167h1v5h-1zM438 167h1v5h-1zM439 167h1v3h-1zM440 167h1v3h-1zM441 167h1v5h-1zM442 167h1v5h-1zM443 167h1v5h-1zM444 167h1v5h-1zM445 167h1v5h-1zM446 167h1v5h-1zM447 167h1v7h-1zM448 167h1v7h-1zM449 167h1v5h-1zM450 167h1v5h-1zM451 167h1v5h-1zM452 167h1v5h-1zM453 167h1v5h-1zM454 168h1v4h-1zM455 168h1v4h-1zM456 168h1v6h-1zM457 168h1v6h-1zM458 168h1v6h-1zM459 168h1v6h-1zM460 168h1v6h-1zM461 168h1v6h-1zM462 168h1v4h-1zM463 168h1v4h-1zM464 168h1v4h-1zM465 168h1v6h-1zM466 168h1v6h-1zM467 168h1v4h-1zM468 168h1v4h-1zM469 168h1v6h-1zM470 168h1v6h-1zM471 168h1v6h-1zM472 168h1v4h-1zM473 169h1v3h-1zM474 169h1v5h-1zM475 169h1v5h-1zM476 169h1v5h-1zM477 169h1v5h-1zM478 169h1v5h-1zM479 169h1v5h-1zM480 169h1v5h-1zM481 169h1v5h-1zM482 169h1v5h-1zM483 169h1v5h-1zM484 169h1v5h-1zM485 169h1v5h-1zM486 169h1v5h-1zM487 169h1v7h-1zM488 169h1v5h-1zM489 169h1v5h-1zM490 169h1v5h-1zM491 169h1v5h-1zM492 170h1v6h-1zM493 170h1v4h-1zM494 170h1v4h-1zM495 170h1v4h-1zM496 170h1v4h-1zM497 170h1v6h-1zM498 170h1v6h-1zM499 170h1v6h-1zM500 170h1v4h-1zM501 170h1v4h-1zM502 170h1v4h-1zM503 170h1v6h-1zM504 168h1v6h-1zM505 170h1v4h-1zM506 170h1v4h-1zM507 170h1v4h-1zM508 170h1v6h-1zM509 170h1v4h-1zM510 170h1v6h-1zM511 171h1v3h-1zM512 171h1v5h-1zM513 171h1v5h-1zM514 171h1v5h-1zM515 171h1v5h-1zM516 171h1v3h-1zM517 171h1v5h-1zM518 170h1v6h-1zM519 170h1v6h-1zM520 171h1v5h-1zM521 171h1v5h-1zM522 171h1v5h-1zM523 171h1v5h-1zM524 171h1v5h-1zM525 171h1v5h-1zM526 171h1v5h-1zM527 171h1v5h-1zM528 171h1v5h-1zM529 171h1v5h-1zM530 172h1v4h-1zM531 172h1v4h-1zM532 172h1v6h-1zM533 172h1v6h-1zM534 172h1v4h-1zM535 172h1v6h-1zM536 172h1v4h-1zM537 172h1v4h-1zM538 172h1v4h-1zM539 172h1v4h-1zM540 172h1v4h-1zM541 172h1v4h-1zM542 172h1v6h-1zM543 172h1v6h-1zM544 172h1v6h-1zM545 172h1v6h-1zM546 172h1v4h-1zM547 172h1v6h-1zM548 172h1v4h-1zM549 172h1v4h-1zM550 173h1v3h-1zM551 173h1v3h-1zM552 173h1v3h-1zM553 173h1v3h-1zM554 172h1v6h-1zM555 173h1v5h-1zM556 173h1v5h-1zM557 173h1v5h-1zM558 173h1v5h-1zM559 173h1v5h-1zM560 173h1v5h-1zM561 173h1v3h-1zM562 173h1v5h-1zM563 173h1v5h-1zM564 173h1v5h-1zM565 173h1v5h-1zM566 173h1v5h-1zM567 173h1v7h-1zM568 174h1v6h-1zM569 174h1v4h-1zM570 174h1v4h-1zM571 174h1v4h-1zM572 174h1v4h-1zM573 174h1v4h-1zM574 174h1v4h-1zM575 174h1v6h-1zM576 174h1v6h-1zM577 174h1v6h-1zM578 174h1v6h-1zM579 174h1v4h-1zM580 174h1v4h-1zM581 174h1v6h-1zM582 174h1v4h-1zM583 174h1v4h-1zM584 174h1v6h-1zM585 174h1v4h-1zM586 174h1v6h-1zM587 174h1v6h-1zM588 175h1v5h-1zM589 175h1v5h-1zM590 175h1v5h-1zM591 175h1v5h-1zM592 175h1v3h-1zM593 174h1v6h-1zM594 175h1v5h-1zM595 175h1v5h-1zM596 175h1v5h-1zM597 175h1v5h-1zM598 175h1v5h-1zM599 175h1v5h-1zM600 175h1v5h-1zM601 175h1v3h-1zM602 174h1v6h-1zM603 175h1v5h-1zM604 175h1v5h-1zM605 175h1v5h-1zM606 175h1v5h-1zM607 175h1v5h-1zM608 176h1v4h-1zM609 176h1v4h-1zM610 176h1v4h-1zM611 176h1v4h-1zM612 176h1v4h-1zM613 176h1v4h-1zM614 176h1v4h-1zM615 176h1v4h-1zM616 176h1v4h-1zM617 176h1v4h-1zM618 176h1v4h-1zM619 176h1v4h-1zM620 176h1v4h-1zM621 176h1v4h-1zM622 176h1v6h-1zM623 176h1v6h-1zM624 176h1v4h-1zM625 176h1v4h-1zM626 176h1v4h-1zM627 176h1v4h-1zM628 177h1v3h-1zM629 177h1v3h-1zM630 177h1v3h-1zM631 177h1v3h-1zM632 177h1v3h-1zM633 177h1v3h-1zM634 177h1v5h-1zM635 177h1v5h-1zM636 177h1v5h-1zM637 177h1v5h-1zM638 177h1v5h-1zM639 177h1v5h-1zM640 177h1v5h-1zM641 177h1v3h-1zM642 177h1v3h-1zM643 177h1v3h-1zM644 177h1v3h-1zM645 177h1v5h-1zM646 177h1v5h-1zM647 177h1v5h-1zM648 176h1v6h-1zM649 176h1v6h-1zM650 176h1v6h-1zM651 178h1v4h-1zM652 178h1v4h-1zM653 178h1v4h-1zM654 178h1v4h-1zM655 178h1v4h-1z"/>
<path fill="#00ffff" d="M16 222h1v5h-1zM17 222h1v5h-1zM18 224h1v5h-1zM19 222h1v9h-1zM20 222h1v7h-1zM21 222h1v5h-1zM22 220h1v9h-1zM23 220h1v7h-1zM24 224h1v3h-1zM25 220h1v9h-1zM26 222h1v5h-1zM27 222h1v7h-1zM28 224h1v5h-1zM29 224h1v5h-1zM30 220h1v9h-1zM31 222h1v5h-1zM32 222h1v5h-1zM33 222h1v5h-1zM34 220h1v9h-1zM35 222h1v7h-1zM36 222h1v7h-1zM37 222h1v7h-1zM38 220h1v7h-1zM39 220h1v7h-1zM40 222h1v5h-1zM41 222h1v7h-1zM42 222h1v7h-1zM43 222h1v7h-1zM44 222h1v7h-1zM45 222h1v7h-1zM46 220h1v5h-1zM47 224h1v5h-1zM48 220h1v5h-1zM49 218h1v9h-1zM50 224h1v5h-1zM51 222h1v7h-1zM52 222h1v5h-1zM53 222h1v5h-1zM54 222h1v7h-1zM55 222h1v7h-1zM56 222h1v5h-1zM57 222h1v5h-1zM58 222h1v5h-1zM59 224h1v3h-1zM60 224h1v3h-1zM61 222h1v7h-1zM62 222h1v5h-1zM63 222h1v5h-1zM64 222h1v5h-1zM65 220h1v9h-1zM66 220h1v9h-1zM67 222h1v5h-1zM68 222h1v7h-1zM69 222h1v5h-1zM70 220h1v11h-1zM71 220h1v7h-1zM72 222h1v3h-1zM73 218h1v11h-1zM74 218h1v11h-1zM75 222h1v5h-1zM76 224h1v3h-1zM77 220h1v7h-1zM78 220h1v7h-1zM79 222h1v5h-1zM80 222h1v7h-1zM81 222h1v7h-1zM82 222h1v5h-1zM83 222h1v5h-1zM84 222h1v7h-1zM85 222h1v7h-1zM86 220h1v7h-1zM87 222h1v7h-1zM88 222h1v7h-1zM89 222h1v7h-1zM90 222h1v5h-1zM91 222h1v5h-1zM92 220h1v7h-1zM93 220h1v7h-1zM94 220h1v7h-1zM95 220h1v7h-1zM96 222h1v7h-1zM97 222h1v5h-1zM98 222h1v5h-1zM99 222h1v9h-1zM100 220h1v9h-1zM101 222h1v7h-1zM102 222h1v7h-1zM103 224h1v5h-1zM104 224h1v5h-1zM105 222h1v5h-1zM106 224h1v5h-1zM107 224h1v5h-1zM108 224h1v5h-1zM109 222h1v5h-1zM110 222h1v5h-1zM111 222h1v7h-1zM112 222h1v7h-1zM113 222h1v7h-1zM114 222h1v7h-1zM115 222h1v7h-1zM116 222h1v7h-1zM117 222h1v5h-1zM118 222h1v7h-1zM119 222h1v5h-1zM120 220h1v7h-1zM121 224h1v3h-1zM122 222h1v7h-1zM123 222h1v5h-1zM124 220h1v11h-1zM125 224h1v5h-1zM126 218h1v11h-1zM127 218h1v11h-1zM128 222h1v7h-1zM129 222h1v7h-1zM130 222h1v7h-1zM131 222h1v7h-1zM132 222h1v7h-1zM133 222h1v5h-1zM134 222h1v5h-1zM135 222h1v5h-1zM136 222h1v5h-1zM137 222h1v5h-1zM138 220h1v7h-1zM139 224h1v3h-1zM140 224h1v5h-1zM141 224h1v5h-1zM142 220h1v9h-1zM143 222h1v5h-1zM144 222h1v9h-1zM145 224h1v3h-1zM146 218h1v7h-1zM147 222h1v7h-1zM148 222h1v9h-1zM149 220h1v7h-1zM150 220h1v7h-1zM151 220h1v7h-1zM152 220h1v7h-1zM153 224h1v5h-1zM154 220h1v7h-1zM155 224h1v5h-1zM156 224h1v5h-1zM157 224h1v5h-1zM158 222h1v7h-1zM159 224h1v3h-1zM160 224h1v3h-1zM161 224h1v3h-1zM162 224h1v3h-1zM163 222h1v5h-1zM164 222h1v5h-1zM165 222h1v5h-1zM166 224h1v7h-1zM167 222h1v5h-1zM168 220h1v7h-1zM169 220h1v7h-1zM170 220h1v7h-1zM171 220h1v7h-1zM172 220h1v7h-1zM173 222h1v9h-1zM174 220h1v7h-1zM175 220h1v9h-1zM176 222h1v5h-1zM177 222h1v5h-1zM178 224h1v5h-1zM179 220h1v9h-1zM180 220h1v9h-1zM181 222h1v5h-1zM182 224h1v3h-1zM183 224h1v3h-1zM184 224h1v3h-1zM185 222h1v5h-1zM186 220h1v9h-1zM187 220h1v9h-1zM188 220h1v9h-1zM189 220h1v9h-1zM190 222h1v5h-1zM191 222h1v5h-1zM192 222h1v7h-1zM193 224h1v5h-1zM194 222h1v5h-1zM195 222h1v5h-1zM196 224h1v3h-1zM197 224h1v3h-1zM198 222h1v7h-1zM199 222h1v7h-1zM200 220h1v7h-1zM201 220h1v9h-1zM202 222h1v5h-1zM203 222h1v5h-1zM204 218h1v9h-1zM205 220h1v9h-1zM206 220h1v11h-1zM207 220h1v11h-1zM208 224h1v5h-1zM209 222h1v5h-1zM210 222h1v9h-1zM211 222h1v7h-1zM212 222h1v7h-1zM213 224h1v5h-1zM214 222h1v5h-1zM215 222h1v5h-1zM216 220h1v7h-1zM217 220h1v7h-1zM218 222h1v5h-1zM219 222h1v7h-1zM220 222h1v7h-1zM221 222h1v7h-1zM222 222h1v7h-1zM223 222h1v7h-1zM224 222h1v7h-1zM225 222h1v7h-1zM226 222h1v5h-1zM227 222h1v5h-1zM228 222h1v5h-1zM229 222h1v5h-1zM230 222h1v3h-1zM231 220h1v9h-1zM232 222h1v5h-1zM233 220h1v9h-1zM234 222h1v5h-1zM235 222h1v5h-1zM236 222h1v5h-1zM237 222h1v5h-1zM238 222h1v5h-1zM239 224h1v5h-1zM240 224h1v5h-1zM241 222h1v7h-1zM242 224h1v5h-1zM243 222h1v5h-1zM244 222h1v5h-1zM245 222h1v5h-1zM246 222h1v5h-1zM247 220h1v11h-1zM248 222h1v5h-1zM249 222h1v5h-1zM250 220h1v9h-1zM251 220h1v7h-1zM252 220h1v7h-1zM253 220h1v7h-1zM254 220h1v7h-1zM255 220h1v7h-1zM256 222h1v7h-1zM257 222h1v7h-1zM258 222h1v7h-1zM259 224h1v5h-1zM260 222h1v5h-1zM261 222h1v5h-1zM262 224h1v5h-1zM263 224h1v5h-1zM264 224h1v5h-1zM265 224h1v5h-1zM266 220h1v9h-1zM267 220h1v9h-1zM268 220h1v9h-1zM269 222h1v7h-1zM270 222h1v7h-1zM271 220h1v7h-1zM272 222h1v5h-1zM273 222h1v5h-1zM274 222h1v5h-1zM275 222h1v5h-1zM276 222h1v5h-1zM277 222h1v7h-1zM278 220h1v7h-1zM279 224h1v5h-1zM280 224h1v5h-1zM281 222h1v5h-1zM282 222h1v5h-1zM283 220h1v7h-1zM284 222h1v9h-1zM285 222h1v9h-1zM286 220h1v7h-1zM287 222h1v7h-1zM288 222h1v7h-1zM289 222h1v7h-1zM290 222h1v7h-1zM291 222h1v7h-1zM292 222h1v7h-1zM293 222h1v5h-1zM294 222h1v5h-1zM295 222h1v5h-1zM296 222h1v7h-1zM297 222h1v7h-1zM298 222h1v7h-1zM299 222h1v7h-1zM300 222h1v7h-1zM301 222h1v7h-1zM302 222h1v7h-1zM303 222h1v5h-1zM304 220h1v9h-1zM305 222h1v7h-1zM306 220h1v7h-1zM307 220h1v7h-1zM308 222h1v5h-1zM309 220h1v9h-1zM310 220h1v9h-1zM311 220h1v9h-1zM312 220h1v9h-1zM313 220h1v9h-1zM314 222h1v7h-1zM315 222h1v7h-1zM316 222h1v7h-1zM317 220h1v9h-1zM318 220h1v9h-1zM319 224h1v5h-1zM320 220h1v7h-1zM321 222h1v7h-1zM322 220h1v11h-1zM323 220h1v11h-1zM324 220h1v11h-1zM325 220h1v11h-1zM326 220h1v11h-1zM327 224h1v3h-1zM328 222h1v9h-1zM329 220h1v7h-1zM330 222h1v7h-1zM331 224h1v7h-1zM332 220h1v11h-1zM333 220h1v7h-1zM334 222h1v5h-1zM335 222h1v7h-1zM336 222h1v7h-1zM337 222h1v7h-1zM338 222h1v7h-1zM339 222h1v7h-1zM340 222h1v7h-1zM341 222h1v7h-1zM342 220h1v7h-1zM343 222h1v3h-1zM344 222h1v3h-1zM345 222h1v3h-1zM346 222h1v7h-1zM347 218h1v11h-1zM348 220h1v9h-1zM349 222h1v5h-1zM350 218h1v9h-1zM351 222h1v7h-1zM352 224h1v5h-1zM353 224h1v5h-1zM354 224h1v5h-1zM355 220h1v9h-1zM356 220h1v9h-1zM357 224h1v5h-1zM358 224h1v5h-1zM359 222h1v7h-1zM360 222h1v7h-1zM361 222h1v7h-1zM362 222h1v7h-1zM363 222h1v7h-1zM364 220h1v9h-1zM365 222h1v7h-1zM366 222h1v9h-1zM367 222h1v7h-1zM368 222h1v7h-1zM369 220h1v11h-1zM370 220h1v11h-1zM371 224h1v5h-1zM372 224h1v5h-1zM373 222h1v7h-1zM374 224h1v5h-1zM375 220h1v7h-1zM376 220h1v7h-1zM377 222h1v5h-1zM378 222h1v5h-1zM379 222h1v7h-1zM380 222h1v7h-1zM381 218h1v9h-1zM382 218h1v9h-1zM383 218h1v9h-1zM384 220h1v7h-1zM385 220h1v7h-1zM386 220h1v7h-1zM387 220h1v7h-1zM388 222h1v5h-1zM389 222h1v7h-1zM390 224h1v5h-1zM391 222h1v9h-1zM392 222h1v7h-1zM393 224h1v5h-1zM394 224h1v5h-1zM395 222h1v5h-1zM396 222h1v5h-1zM397 222h1v5h-1zM398 222h1v7h-1zM399 224h1v5h-1zM400 222h1v7h-1zM401 220h1v9h-1zM402 224h1v3h-1zM403 222h1v7h-1zM404 222h1v7h-1zM405 222h1v7h-1zM406 222h1v5h-1zM407 128h1v99h-1z"/>
<path fill="#00ffff" d="M407 132h1v4h-1zM408 128h1v8h-1zM409 128h1v8h-1zM410 128h1v8h-1zM411 130h1v6h-1zM412 132h1v4h-1zM413 132h1v4h-1zM414 132h1v4h-1zM415 130h1v6h-1zM416 132h1v2h-1zM417 132h1v2h-1zM418 132h1v2h-1zM419 130h1v6h-1zM420 130h1v6h-1zM421 130h1v4h-1zM422 130h1v4h-1zM423 130h1v6h-1zM424 132h1v2h-1zM425 132h1v2h-1zM426 132h1v4h-1zM427 130h1v6h-1zM428 130h1v6h-1zM429 132h1v4h-1zM430 132h1v4h-1zM431 132h1v2h-1zM432 128h1v8h-1zM433 130h1v6h-1zM434 130h1v6h-1zM435 130h1v6h-1zM436 130h1v6h-1zM437 130h1v4h-1zM438 130h1v6h-1zM439 130h1v6h-1zM440 132h1v2h-1zM441 132h1v2h-1zM442 132h1v2h-1zM443 130h1v6h-1zM444 130h1v6h-1zM445 130h1v4h-1zM446 130h1v4h-1zM447 130h1v8h-1zM448 132h1v4h-1zM449 130h1v4h-1zM450 130h1v6h-1zM451 128h1v8h-1zM452 132h1v2h-1zM453 132h1v2h-1zM454 130h1v6h-1zM455 130h1v6h-1zM456 130h1v8h-1zM457 130h1v4h-1zM458 130h1v4h-1zM459 130h1v4h-1zM460 130h1v4h-1zM461 130h1v6h-1zM462 130h1v8h-1zM463 130h1v8h-1zM464 130h1v6h-1zM465 130h1v6h-1zM466 132h1v6h-1zM467 132h1v4h-1zM468 132h1v2h-1zM469 130h1v6h-1zM470 132h1v4h-1zM471 132h1v4h-1zM472 130h1v4h-1zM473 130h1v4h-1zM474 130h1v4h-1zM475 130h1v4h-1zM476 130h1v4h-1zM477 128h1v6h-1zM478 132h1v4h-1zM479 128h1v8h-1zM480 130h1v4h-1zM481 130h1v4h-1zM482 130h1v8h-1zM483 130h1v6h-1zM484 130h1v4h-1zM485 130h1v4h-1zM486 130h1v6h-1zM487 130h1v6h-1zM488 132h1v4h-1zM489 130h1v6h-1zM490 130h1v6h-1zM491 130h1v6h-1zM492 132h1v4h-1zM493 132h1v4h-1zM494 132h1v4h-1zM495 130h1v4h-1zM496 130h1v4h-1zM497 130h1v4h-1zM498 130h1v4h-1zM499 130h1v6h-1zM500 130h1v4h-1zM501 130h1v4h-1zM502 130h1v4h-1zM503 130h1v6h-1zM504 128h1v6h-1zM505 130h1v6h-1zM506 132h1v4h-1zM507 132h1v4h-1zM508 132h1v4h-1zM509 130h1v4h-1zM510 132h1v4h-1zM511 132h1v4h-1zM512 130h1v6h-1zM513 130h1v6h-1zM514 132h1v4h-1zM515 130h1v6h-1zM516 130h1v6h-1zM517 130h1v6h-1zM518 130h1v6h-1zM519 132h1v6h-1zM520 132h1v4h-1zM521 130h1v6h-1zM522 130h1v6h-1zM523 132h1v4h-1zM524 132h1v4h-1zM525 130h1v4h-1zM526 130h1v6h-1zM527 130h1v6h-1zM528 130h1v4h-1zM529 130h1v4h-1zM530 130h1v4h-1zM531 130h1v4h-1zM532 130h1v4h-1zM533 130h1v4h-1zM534 130h1v4h-1zM535 130h1v4h-1zM536 130h1v4h-1zM537 130h1v4h-1zM538 132h1v4h-1zM539 130h1v6h-1zM540 130h1v6h-1zM541 130h1v8h-1zM542 130h1v4h-1zM543 132h1v4h-1zM544 130h1v4h-1zM545 130h1v4h-1zM546 130h1v4h-1zM547 130h1v4h-1zM548 130h1v6h-1zM549 130h1v6h-1zM550 130h1v6h-1zM551 130h1v6h-1zM552 130h1v6h-1zM553 132h1v4h-1zM554 130h1v4h-1zM555 130h1v6h-1zM556 130h1v6h-1zM557 130h1v6h-1zM558 130h1v6h-1zM559 132h1v2h-1zM560 132h1v2h-1zM561 132h1v4h-1zM562 130h1v6h-1zM563 130h1v6h-1zM564 130h1v6h-1zM565 130h1v6h-1zM566 130h1v6h-1zM567 130h1v6h-1zM568 130h1v6h-1zM569 130h1v6h-1zM570 130h1v6h-1zM571 130h1v4h-1zM572 130h1v4h-1zM573 130h1v4h-1zM574 132h1v6h-1zM575 130h1v6h-1zM576 130h1v4h-1zM577 130h1v6h-1zM578 130h1v4h-1zM579 130h1v4h-1zM580 130h1v4h-1zM581 130h1v4h-1zM582 130h1v4h-1zM583 130h1v4h-1zM584 132h1v4h-1zM585 132h1v4h-1zM586 130h1v6h-1zM587 130h1v6h-1zM588 130h1v6h-1zM589 130h1v6h-1zM590 132h1v4h-1zM591 130h1v8h-1zM592 130h1v8h-1zM593 130h1v6h-1zM594 130h1v6h-1zM595 130h1v6h-1zM596 132h1v4h-1zM597 130h1v6h-1zM598 130h1v6h-1zM599 132h1v4h-1zM600 130h1v4h-1zM601 132h1v6h-1zM602 132h1v6h-1zM603 132h1v6h-1zM604 130h1v6h-1zM605 130h1v6h-1zM606 130h1v6h-1zM607 130h1v4h-1zM608 130h1v4h-1zM609 132h1v4h-1zM610 132h1v4h-1zM611 132h1v4h-1zM612 132h1v4h-1zM613 132h1v4h-1zM614 132h1v4h-1zM615 130h1v4h-1zM616 130h1v6h-1zM617 130h1v6h-1zM618 132h1v4h-1zM619 132h1v4h-1zM620 132h1v2h-1zM621 132h1v2h-1zM622 130h1v6h-1zM623 130h1v6h-1zM624 132h1v4h-1zM625 130h1v6h-1zM626 130h1v2h-1zM627 130h1v4h-1zM628 130h1v6h-1zM629 132h1v4h-1zM630 130h1v6h-1zM631 128h1v8h-1zM632 128h1v8h-1zM633 128h1v8h-1zM634 128h1v8h-1zM635 130h1v4h-1zM636 130h1v6h-1zM637 130h1v6h-1zM638 130h1v6h-1zM639 128h1v6h-1zM640 128h1v6h-1zM641 128h1v6h-1zM642 128h1v6h-1zM643 132h1v4h-1zM644 130h1v6h-1zM645 130h1v6h-1zM646 130h1v6h-1zM647 130h1v6h-1zM648 132h1v4h-1zM649 130h1v4h-1zM650 130h1v4h-1zM651 130h1v4h-1zM652 130h1v4h-1zM653 130h1v6h-1zM654 130h1v6h-1zM655 130h1v6h-1z"/>
<path fill="#ff1800" d="M16 138h1v5h-1zM17 140h1v3h-1zM18 140h1v3h-1zM19 140h1v5h-1zM20 140h1v5h-1zM21 138h1v7h-1zM22 140h1v5h-1zM23 140h1v5h-1zM24 138h1v7h-1zM25 140h1v5h-1zM26 140h1v5h-1zM27 140h1v5h-1zM28 138h1v7h-1zM29 138h1v7h-1zM30 138h1v7h-1zM31 138h1v7h-1zM32 138h1v7h-1zM33 140h1v7h-1zM34 140h1v7h-1zM35 140h1v7h-1zM36 140h1v7h-1zM37 142h1v3h-1zM38 138h1v9h-1zM39 140h1v7h-1zM40 136h1v11h-1zM41 140h1v9h-1zM42 140h1v7h-1zM43 140h1v7h-1zM44 138h1v7h-1zM45 140h1v7h-1zM46 140h1v7h-1zM47 140h1v7h-1zM48 140h1v9h-1zM49 140h1v9h-1zM50 140h1v9h-1zM51 140h1v5h-1zM52 140h1v5h-1zM53 138h1v9h-1zM54 138h1v9h-1zM55 142h1v7h-1zM56 140h1v9h-1zM57 140h1v5h-1zM58 140h1v5h-1zM59 138h1v9h-1zM60 140h1v7h-1zM61 142h1v5h-1zM62 140h1v7h-1zM63 142h1v5h-1zM64 140h1v9h-1zM65 142h1v5h-1zM66 142h1v5h-1zM67 142h1v5h-1zM68 142h1v5h-1zM69 142h1v5h-1zM70 142h1v5h-1zM71 142h1v5h-1zM72 142h1v5h-1zM73 142h1v7h-1zM74 142h1v7h-1zM75 142h1v7h-1zM76 142h1v7h-1zM77 142h1v7h-1zM78 142h1v5h-1zM79 142h1v5h-1zM80 142h1v5h-1zM81 142h1v7h-1zM82 144h1v7h-1zM83 142h1v7h-1zM84 142h1v7h-1zM85 142h1v5h-1zM86 142h1v5h-1zM87 142h1v5h-1zM88 144h1v5h-1zM89 142h1v5h-1zM90 144h1v5h-1zM91 144h1v5h-1zM92 142h1v5h-1zM93 144h1v5h-1zM94 144h1v5h-1zM95 144h1v5h-1zM96 142h1v9h-1zM97 142h1v9h-1zM98 146h1v3h-1zM99 146h1v3h-1zM100 146h1v3h-1zM101 146h1v5h-1zM102 144h1v7h-1zM103 144h1v7h-1zM104 144h1v7h-1zM105 144h1v7h-1zM106 144h1v7h-1zM107 142h1v7h-1zM108 144h1v7h-1zM109 144h1v7h-1zM110 144h1v9h-1zM111 144h1v9h-1zM112 144h1v9h-1zM113 144h1v9h-1zM114 144h1v9h-1zM115 144h1v5h-1zM116 144h1v5h-1zM117 144h1v9h-1zM118 144h1v5h-1zM119 146h1v5h-1zM120 146h1v7h-1zM121 146h1v7h-1zM122 146h1v5h-1zM123 144h1v7h-1zM124 146h1v7h-1zM125 146h1v7h-1zM126 148h1v5h-1zM127 146h1v5h-1zM128 144h1v7h-1zM129 144h1v7h-1zM130 146h1v5h-1zM131 146h1v5h-1zM132 146h1v5h-1zM133 146h1v5h-1zM134 146h1v5h-1zM135 146h1v7h-1zM136 146h1v7h-1zM137 146h1v7h-1zM138 146h1v5h-1zM139 146h1v5h-1zM140 146h1v7h-1zM141 146h1v5h-1zM142 146h1v7h-1zM143 146h1v7h-1zM144 146h1v7h-1zM145 146h1v5h-1zM146 146h1v5h-1zM147 146h1v7h-1zM148 148h1v3h-1zM149 146h1v7h-1zM150 148h1v5h-1zM151 146h1v5h-1zM152 148h1v5h-1zM153 148h1v5h-1zM154 146h1v7h-1zM155 146h1v7h-1zM156 146h1v9h-1zM157 148h1v7h-1zM158 146h1v7h-1zM159 146h1v7h-1zM160 146h1v7h-1zM161 146h1v7h-1zM162 148h1v5h-1zM163 148h1v5h-1zM164 148h1v7h-1zM165 148h1v5h-1zM166 148h1v5h-1zM167 148h1v5h-1zM168 148h1v5h-1zM169 148h1v5h-1zM170 148h1v5h-1zM171 148h1v5h-1zM172 146h1v7h-1zM173 148h1v7h-1zM174 148h1v5h-1zM175 148h1v7h-1zM176 150h1v7h-1zM177 148h1v7h-1zM178 150h1v5h-1zM179 148h1v5h-1zM180 148h1v5h-1zM181 148h1v7h-1zM182 148h1v7h-1zM183 150h1v5h-1zM184 148h1v7h-1zM185 150h1v5h-1zM186 148h1v7h-1zM187 148h1v7h-1zM188 148h1v7h-1zM189 150h1v5h-1zM190 150h1v5h-1zM191 148h1v7h-1zM192 148h1v7h-1zM193 148h1v7h-1zM194 148h1v7h-1zM195 148h1v7h-1zM196 152h1v5h-1zM197 148h1v9h-1zM198 148h1v9h-1zM199 148h1v9h-1zM200 150h1v5h-1zM201 150h1v5h-1zM202 150h1v7h-1zM203 150h1v7h-1zM204 152h1v3h-1zM205 148h1v7h-1zM206 148h1v7h-1zM207 148h1v7h-1zM208 150h1v7h-1zM209 150h1v7h-1zM210 150h1v7h-1zM211 150h1v5h-1zM212 150h1v9h-1zM213 150h1v9h-1zM214 150h1v7h-1zM215 150h1v5h-1zM216 152h1v3h-1zM217 152h1v5h-1zM218 152h1v7h-1zM219 152h1v7h-1zM220 152h1v7h-1zM221 152h1v3h-1zM222 150h1v7h-1zM223 150h1v7h-1zM224 150h1v7h-1zM225 152h1v5h-1zM226 150h1v7h-1zM227 150h1v7h-1zM228 152h1v7h-1zM229 152h1v7h-1zM230 152h1v7h-1zM231 152h1v7h-1zM232 154h1v5h-1zM233 154h1v5h-1zM234 154h1v3h-1zM235 152h1v5h-1zM236 152h1v5h-1zM237 152h1v5h-1zM238 152h1v7h-1zM239 154h1v5h-1zM240 152h1v7h-1zM241 152h1v5h-1zM242 152h1v5h-1zM243 152h1v5h-1zM244 152h1v7h-1zM245 152h1v7h-1zM246 152h1v7h-1zM247 152h1v7h-1zM248 152h1v7h-1zM249 152h1v9h-1zM250 152h1v9h-1zM251 154h1v5h-1zM252 154h1v5h-1zM253 154h1v5h-1zM254 150h1v9h-1zM255 150h1v9h-1zM256 154h1v5h-1zM257 154h1v5h-1zM258 154h1v5h-1zM259 154h1v5h-1zM260 152h1v7h-1zM261 152h1v7h-1zM262 154h1v5h-1zM263 154h1v5h-1zM264 156h1v3h-1zM265 154h1v5h-1zM266 154h1v5h-1zM267 154h1v5h-1zM268 152h1v9h-1zM269 156h1v5h-1zM270 156h1v5h-1zM271 154h1v7h-1zM272 154h1v7h-1zM273 154h1v5h-1zM274 154h1v5h-1zM275 154h1v5h-1zM276 154h1v7h-1zM277 154h1v7h-1zM278 156h1v5h-1zM279 156h1v5h-1zM280 156h1v5h-1zM281 156h1v5h-1zM282 156h1v5h-1zM283 156h1v5h-1zM284 156h1v5h-1zM285 156h1v5h-1zM286 152h1v9h-1zM287 152h1v9h-1zM288 152h1v9h-1zM289 154h1v5h-1zM290 154h1v5h-1zM291 154h1v5h-1zM292 156h1v5h-1zM293 154h1v7h-1zM294 154h1v7h-1zM295 156h1v7h-1zM296 156h1v5h-1zM297 156h1v5h-1zM298 156h1v5h-1zM299 156h1v5h-1zM300 156h1v5h-1zM301 156h1v7h-1zM302 156h1v5h-1zM303 156h1v5h-1zM304 156h1v5h-1zM305 158h1v5h-1zM306 158h1v5h-1zM307 156h1v5h-1zM308 156h1v5h-1zM309 156h1v5h-1zM310 156h1v5h-1zM311 156h1v5h-1zM312 156h1v5h-1zM313 156h1v5h-1zM314 158h1v5h-1zM315 158h1v5h-1zM316 158h1v5h-1zM317 156h1v5h-1zM318 156h1v9h-1zM319 158h1v5h-1zM320 158h1v5h-1zM321 158h1v5h-1zM322 158h1v5h-1zM323 158h1v3h-1zM324 158h1v3h-1zM325 160h1v3h-1zM326 160h1v3h-1zM327 158h1v5h-1zM328 158h1v5h-1zM329 158h1v5h-1zM330 160h1v3h-1zM331 158h1v5h-1zM332 158h1v5h-1zM333 160h1v5h-1zM334 158h1v5h-1zM335 158h1v5h-1zM336 158h1v5h-1zM337 158h1v5h-1zM338 158h1v7h-1zM339 158h1v7h-1zM340 160h1v3h-1zM341 160h1v5h-1zM342 158h1v7h-1zM343 158h1v5h-1zM344 160h1v5h-1zM345 160h1v7h-1zM346 158h1v5h-1zM347 158h1v5h-1zM348 158h1v5h-1zM349 158h1v5h-1zM350 158h1v7h-1zM351 158h1v7h-1zM352 158h1v7h-1zM353 160h1v3h-1zM354 160h1v5h-1zM355 160h1v5h-1zM356 160h1v5h-1zM357 160h1v5h-1zM358 160h1v7h-1zM359 160h1v5h-1zM360 160h1v5h-1zM361 160h1v7h-1zM362 160h1v7h-1zM363 160h1v3h-1zM364 160h1v3h-1zM365 160h1v3h-1zM366 160h1v5h-1zM367 160h1v5h-1zM368 160h1v5h-1zM369 160h1v7h-1zM370 160h1v7h-1zM371 160h1v7h-1zM372 162h1v5h-1zM373 160h1v5h-1zM374 160h1v5h-1zM375 158h1v7h-1zM376 162h1v5h-1zM377 162h1v5h-1zM378 160h1v5h-1zM379 162h1v5h-1zM380 160h1v7h-1zM381 162h1v3h-1zM382 162h1v3h-1zM383 162h1v5h-1zM384 162h1v5h-1zM385 160h1v9h-1zM386 162h1v5h-1zM387 162h1v5h-1zM388 162h1v5h-1zM389 160h1v7h-1zM390 160h1v7h-1zM391 160h1v7h-1zM392 160h1v7h-1zM393 162h1v5h-1zM394 162h1v5h-1zM395 160h1v7h-1zM396 160h1v7h-1zM397 160h1v7h-1zM398 162h1v5h-1zM399 160h1v7h-1zM400 162h1v7h-1zM401 160h1v7h-1zM402 162h1v3h-1zM403 162h1v7h-1zM404 162h1v7h-1zM405 162h1v7h-1zM406 162h1v7h-1zM407 162h1v7h-1zM408 162h1v7h-1zM409 164h1v5h-1zM410 162h1v5h-1zM411 162h1v5h-1zM412 162h1v5h-1zM413 162h1v5h-1zM414 164h1v3h-1zM415 162h1v7h-1zM416 162h1v7h-1zM417 162h1v5h-1zM418 162h1v5h-1zM419 162h1v5h-1zM420 164h1v3h-1zM421 164h1v3h-1zM422 164h1v5h-1zM423 164h1v5h-1zM424 164h1v5h-1zM425 164h1v5h-1zM426 162h1v5h-1zM427 164h1v3h-1zM428 162h1v7h-1zM429 164h1v5h-1zM430 164h1v5h-1zM431 162h1v7h-1zM432 162h1v7h-1zM433 162h1v7h-1zM434 164h1v7h-1zM435 164h1v5h-1zM436 164h1v5h-1zM437 164h1v3h-1zM438 164h1v3h-1zM439 164h1v5h-1zM440 164h1v5h-1zM441 164h1v5h-1zM442 164h1v5h-1zM443 164h1v7h-1zM444 164h1v7h-1zM445 164h1v7h-1zM446 164h1v5h-1zM447 164h1v5h-1zM448 166h1v3h-1zM449 164h1v5h-1zM450 164h1v5h-1zM451 164h1v5h-1zM452 164h1v5h-1zM453 164h1v5h-1zM454 164h1v5h-1zM455 166h1v5h-1zM456 166h1v5h-1zM457 166h1v5h-1zM458 166h1v5h-1zM459 164h1v7h-1zM460 164h1v7h-1zM461 166h1v3h-1zM462 166h1v3h-1zM463 166h1v3h-1zM464 164h1v5h-1zM465 166h1v5h-1zM466 166h1v5h-1zM467 166h1v5h-1zM468 164h1v7h-1zM469 166h1v5h-1zM470 166h1v5h-1zM471 166h1v5h-1zM472 166h1v5h-1zM473 166h1v5h-1zM474 166h1v5h-1zM475 166h1v5h-1zM476 166h1v5h-1zM477 166h1v7h-1zM478 166h1v7h-1zM479 166h1v7h-1zM480 166h1v7h-1zM481 166h1v5h-1zM482 166h1v5h-1zM483 168h1v3h-1zM484 166h1v7h-1zM485 166h1v5h-1zM486 166h1v5h-1zM487 166h1v5h-1zM488 166h1v5h-1zM489 166h1v5h-1zM490 166h1v7h-1zM491 168h1v3h-1zM492 168h1v5h-1zM493 168h1v5h-1zM494 168h1v7h-1zM495 168h1v7h-1zM496 168h1v5h-1zM497 168h1v3h-1zM498 168h1v5h-1zM499 168h1v5h-1zM500 166h1v5h-1zM501 166h1v5h-1zM502 166h1v5h-1zM503 166h1v7h-1zM504 168h1v5h-1zM505 168h1v5h-1zM506 168h1v5h-1zM507 170h1v3h-1zM508 170h1v3h-1zM509 170h1v3h-1zM510 170h1v3h-1zM511 168h1v5h-1zM512 168h1v5h-1zM513 168h1v5h-1zM514 168h1v5h-1zM515 168h1v5h-1zM516 168h1v5h-1zM517 168h1v3h-1zM518 170h1v5h-1zM519 166h1v7h-1zM520 168h1v7h-1zM521 168h1v5h-1zM522 170h1v5h-1zM523 170h1v5h-1zM524 170h1v5h-1zM525 170h1v5h-1zM526 170h1v5h-1zM527 168h1v5h-1zM528 168h1v7h-1zM529 168h1v7h-1zM530 168h1v7h-1zM531 170h1v3h-1zM532 170h1v3h-1zM533 168h1v7h-1zM534 170h1v3h-1zM535 168h1v5h-1zM536 170h1v5h-1zM537 168h1v7h-1zM538 168h1v7h-1zM539 168h1v7h-1zM540 168h1v7h-1zM541 170h1v5h-1zM542 170h1v5h-1zM543 170h1v5h-1zM544 168h1v7h-1zM545 170h1v5h-1zM546 168h1v7h-1zM547 168h1v7h-1zM548 168h1v7h-1zM549 170h1v5h-1zM550 170h1v5h-1zM551 170h1v7h-1zM552 170h1v5h-1zM553 170h1v5h-1zM554 170h1v5h-1zM555 170h1v5h-1zM556 168h1v7h-1zM557 172h1v5h-1zM558 170h1v5h-1zM559 172h1v5h-1zM560 170h1v5h-1zM561 170h1v7h-1zM562 170h1v7h-1zM563 172h1v3h-1zM564 172h1v3h-1zM565 170h1v7h-1zM566 170h1v7h-1zM567 172h1v5h-1zM568 172h1v5h-1zM569 172h1v5h-1zM570 172h1v5h-1zM571 172h1v3h-1zM572 172h1v5h-1zM573 172h1v5h-1zM574 172h1v5h-1zM575 172h1v5h-1zM576 170h1v7h-1zM577 172h1v5h-1zM578 172h1v5h-1zM579 172h1v5h-1zM580 172h1v5h-1zM581 172h1v5h-1zM582 172h1v5h-1zM583 172h1v5h-1zM584 172h1v5h-1zM585 172h1v5h-1zM586 172h1v5h-1zM587 172h1v5h-1zM588 172h1v5h-1zM589 172h1v5h-1zM590 172h1v5h-1zM591 172h1v3h-1zM592 174h1v3h-1zM593 172h1v5h-1zM594 172h1v5h-1zM595 172h1v7h-1zM596 172h1v7h-1zM597 172h1v7h-1zM598 172h1v7h-1zM599 172h1v5h-1zM600 172h1v7h-1zM601 174h1v5h-1zM602 174h1v3h-1zM603 174h1v3h-1zM604 174h1v5h-1zM605 174h1v5h-1zM606 174h1v3h-1zM607 174h1v3h-1zM608 174h1v3h-1zM609 174h1v3h-1zM610 172h1v5h-1zM611 172h1v7h-1zM612 172h1v5h-1zM613 174h1v5h-1zM614 174h1v5h-1zM615 174h1v5h-1zM616 174h1v5h-1zM617 174h1v5h-1zM618 174h1v5h-1zM619 174h1v5h-1zM620 174h1v5h-1zM621 174h1v5h-1zM622 172h1v7h-1zM623 174h1v5h-1zM624 174h1v5h-1zM625 172h1v5h-1zM626 172h1v5h-1zM627 174h1v5h-1zM628 174h1v5h-1zM629 174h1v5h-1zM630 174h1v5h-1zM631 174h1v5h-1zM632 176h1v3h-1zM633 174h1v5h-1zM634 174h1v5h-1zM635 174h1v5h-1zM636 176h1v3h-1zM637 174h1v7h-1zM638 174h1v5h-1zM639 174h1v5h-1zM640 174h1v5h-1zM641 174h1v5h-1zM642 174h1v5h-1zM643 176h1v3h-1zM644 176h1v3h-1zM645 176h1v5h-1zM646 176h1v5h-1zM647 174h1v7h-1zM648 174h1v7h-1zM649 174h1v5h-1zM650 174h1v5h-1zM651 174h1v5h-1zM652 174h1v5h-1zM653 174h1v5h-1zM654 176h1v3h-1zM655 176h1v3h-1z"/>
<path fill="#00ff00" d="M16 160h1v11h-1zM17 160h1v7h-1zM18 160h1v7h-1zM19 160h1v5h-1zM20 160h1v5h-1zM21 162h1v5h-1zM22 162h1v5h-1zM23 160h1v9h-1zM24 162h1v7h-1zM25 160h1v7h-1zM26 162h1v5h-1zM27 162h1v7h-1zM28 162h1v5h-1zM29 160h1v7h-1zM30 160h1v7h-1zM31 160h1v7h-1zM32 160h1v7h-1zM33 162h1v9h-1zM34 162h1v9h-1zM35 162h1v7h-1zM36 162h1v7h-1zM37 162h1v7h-1zM38 158h1v9h-1zM39 162h1v5h-1zM40 162h1v5h-1zM41 162h1v5h-1zM42 162h1v5h-1zM43 162h1v5h-1zM44 162h1v5h-1zM45 162h1v5h-1zM46 162h1v5h-1zM47 160h1v7h-1zM48 160h1v7h-1zM49 162h1v5h-1zM50 162h1v5h-1zM51 162h1v5h-1zM52 160h1v7h-1zM53 160h1v7h-1zM54 160h1v7h-1zM55 160h1v7h-1zM56 160h1v7h-1zM57 164h1v5h-1zM58 162h1v7h-1zM59 162h1v7h-1zM60 162h1v5h-1zM61 162h1v5h-1zM62 162h1v5h-1zM63 162h1v7h-1zM64 162h1v5h-1zM65 162h1v7h-1zM66 160h1v7h-1zM67 162h1v7h-1zM68 162h1v7h-1zM69 162h1v7h-1zM70 162h1v7h-1zM71 162h1v7h-1zM72 162h1v7h-1zM73 162h1v5h-1zM74 162h1v7h-1zM75 162h1v7h-1zM76 162h1v5h-1zM77 162h1v5h-1zM78 160h1v7h-1zM79 160h1v9h-1zM80 160h1v9h-1zM81 162h1v9h-1zM82 160h1v7h-1zM83 162h1v3h-1zM84 162h1v3h-1zM85 162h1v7h-1zM86 162h1v7h-1zM87 162h1v7h-1zM88 160h1v7h-1zM89 162h1v5h-1zM90 162h1v5h-1zM91 164h1v3h-1zM92 164h1v3h-1zM93 162h1v5h-1zM94 162h1v5h-1zM95 162h1v5h-1zM96 162h1v5h-1zM97 164h1v3h-1zM98 162h1v5h-1zM99 160h1v9h-1zM100 162h1v5h-1zM101 160h1v7h-1zM102 164h1v5h-1zM103 162h1v3h-1zM104 162h1v3h-1zM105 162h1v3h-1zM106 162h1v3h-1zM107 160h1v9h-1zM108 162h1v3h-1zM109 162h1v3h-1zM110 158h1v9h-1zM111 158h1v9h-1zM112 162h1v7h-1zM113 162h1v7h-1zM114 162h1v5h-1zM115 162h1v5h-1zM116 162h1v5h-1zM117 162h1v5h-1zM118 160h1v7h-1zM119 160h1v7h-1zM120 160h1v9h-1zM121 164h1v3h-1zM122 162h1v5h-1zM123 164h1v5h-1zM124 160h1v7h-1zM125 162h1v5h-1zM126 162h1v7h-1zM127 160h1v7h-1zM128 162h1v7h-1zM129 162h1v7h-1zM130 162h1v5h-1zM131 162h1v5h-1zM132 160h1v9h-1zM133 162h1v5h-1zM134 162h1v5h-1zM135 162h1v5h-1zM136 160h1v7h-1zM137 162h1v5h-1zM138 162h1v5h-1zM139 162h1v5h-1zM140 162h1v5h-1zM141 162h1v5h-1zM142 162h1v5h-1zM143 160h1v7h-1zM144 162h1v5h-1zM145 162h1v5h-1zM146 162h1v5h-1zM147 162h1v5h-1zM148 162h1v5h-1zM149 160h1v7h-1zM150 162h1v7h-1zM151 160h1v7h-1zM152 160h1v9h-1zM153 160h1v9h-1zM154 160h1v9h-1zM155 162h1v7h-1zM156 160h1v7h-1zM157 160h1v7h-1zM158 162h1v5h-1zM159 162h1v5h-1zM160 160h1v7h-1zM161 164h1v5h-1zM162 162h1v5h-1zM163 160h1v9h-1zM164 160h1v5h-1zM165 162h1v5h-1zM166 162h1v5h-1zM167 160h1v7h-1zM168 160h1v7h-1zM169 160h1v7h-1zM170 160h1v7h-1zM171 160h1v7h-1zM172 164h1v5h-1zM173 164h1v5h-1zM174 162h1v5h-1zM175 162h1v5h-1zM176 160h1v5h-1zM177 160h1v5h-1zM178 160h1v9h-1zM179 160h1v9h-1zM180 162h1v7h-1zM181 160h1v7h-1zM182 160h1v7h-1zM183 160h1v7h-1zM184 162h1v5h-1zM185 162h1v5h-1zM186 162h1v5h-1zM187 162h1v5h-1zM188 162h1v5h-1zM189 160h1v5h-1zM190 160h1v5h-1zM191 162h1v3h-1zM192 160h1v7h-1zM193 160h1v7h-1zM194 160h1v7h-1zM195 160h1v7h-1zM196 160h1v7h-1zM197 160h1v7h-1zM198 160h1v7h-1zM199 162h1v7h-1zM200 160h1v11h-1zM201 162h1v7h-1zM202 160h1v7h-1zM203 160h1v7h-1zM204 162h1v5h-1zM205 162h1v3h-1zM206 162h1v7h-1zM207 160h1v7h-1zM208 160h1v7h-1zM209 162h1v5h-1zM210 162h1v5h-1zM211 162h1v5h-1zM212 162h1v7h-1zM213 162h1v7h-1zM214 160h1v9h-1zM215 162h1v5h-1zM216 162h1v5h-1zM217 160h1v7h-1zM218 160h1v7h-1zM219 162h1v5h-1zM220 162h1v7h-1zM221 162h1v5h-1zM222 162h1v7h-1zM223 162h1v7h-1zM224 160h1v7h-1zM225 160h1v7h-1zM226 160h1v7h-1zM227 160h1v7h-1zM228 160h1v7h-1zM229 162h1v3h-1zM230 162h1v3h-1zM231 162h1v7h-1zM232 162h1v7h-1zM233 160h1v7h-1zM234 160h1v7h-1zM235 162h1v5h-1zM236 162h1v5h-1zM237 160h1v7h-1zM238 162h1v7h-1zM239 162h1v7h-1zM240 162h1v7h-1zM241 162h1v5h-1zM242 162h1v7h-1zM243 162h1v7h-1zM244 162h1v7h-1zM245 162h1v7h-1zM246 162h1v7h-1zM247 160h1v5h-1zM248 162h1v7h-1zM249 162h1v5h-1zM250 162h1v5h-1zM251 160h1v11h-1zM252 160h1v11h-1zM253 160h1v11h-1zM254 162h1v7h-1zM255 162h1v7h-1zM256 162h1v7h-1zM257 160h1v9h-1zM258 160h1v7h-1zM259 160h1v7h-1zM260 162h1v7h-1zM261 160h1v9h-1zM262 160h1v9h-1zM263 162h1v7h-1zM264 160h1v9h-1zM265 162h1v5h-1zM266 162h1v5h-1zM267 162h1v7h-1zM268 162h1v7h-1zM269 160h1v7h-1zM270 162h1v5h-1zM271 162h1v5h-1zM272 162h1v5h-1zM273 162h1v7h-1zM274 162h1v7h-1zM275 160h1v7h-1zM276 160h1v7h-1zM277 160h1v7h-1zM278 160h1v7h-1zM279 160h1v9h-1zM280 162h1v5h-1zM281 162h1v5h-1zM282 160h1v9h-1zM283 160h1v9h-1zM284 164h1v5h-1zM285 160h1v7h-1zM286 156h1v11h-1zM287 156h1v11h-1zM288 158h1v9h-1zM289 160h1v7h-1zM290 160h1v7h-1zM291 162h1v5h-1zM292 160h1v9h-1zM293 160h1v9h-1zM294 162h1v5h-1zM295 160h1v9h-1zM296 160h1v7h-1zM297 160h1v9h-1zM298 162h1v7h-1zM299 162h1v7h-1zM300 162h1v7h-1zM301 160h1v9h-1zM302 160h1v9h-1zM303 162h1v7h-1zM304 162h1v5h-1zM305 162h1v5h-1zM306 160h1v7h-1zM307 160h1v7h-1zM308 160h1v9h-1zM309 162h1v9h-1zM310 162h1v7h-1zM311 162h1v7h-1zM312 160h1v7h-1zM313 160h1v7h-1zM314 160h1v7h-1zM315 160h1v7h-1zM316 160h1v7h-1zM317 164h1v3h-1zM318 162h1v7h-1zM319 162h1v5h-1zM320 162h1v5h-1zM321 162h1v5h-1zM322 160h1v11h-1zM323 162h1v5h-1zM324 162h1v5h-1zM325 160h1v7h-1zM326 162h1v7h-1zM327 162h1v7h-1zM328 162h1v7h-1zM329 164h1v5h-1zM330 162h1v5h-1zM331 162h1v5h-1zM332 162h1v5h-1zM333 160h1v9h-1zM334 160h1v7h-1zM335 160h1v7h-1zM336 160h1v7h-1zM337 162h1v7h-1zM338 162h1v7h-1zM339 162h1v7h-1zM340 160h1v7h-1zM341 162h1v7h-1zM342 160h1v9h-1zM343 160h1v9h-1zM344 160h1v9h-1zM345 162h1v7h-1zM346 162h1v7h-1zM347 162h1v7h-1zM348 162h1v5h-1zM349 162h1v5h-1zM350 160h1v7h-1zM351 162h1v7h-1zM352 160h1v7h-1zM353 162h1v7h-1zM354 162h1v7h-1zM355 160h1v9h-1zM356 160h1v5h-1zM357 160h1v5h-1zM358 160h1v7h-1zM359 160h1v7h-1zM360 160h1v7h-1zM361 160h1v7h-1zM362 160h1v7h-1zM363 160h1v7h-1zM364 162h1v5h-1zM365 162h1v5h-1zM366 162h1v7h-1zM367 162h1v5h-1zM368 162h1v7h-1zM369 160h1v7h-1zM370 162h1v7h-1zM371 162h1v7h-1zM372 162h1v5h-1zM373 164h1v3h-1zM374 164h1v3h-1zM375 162h1v7h-1zM376 162h1v5h-1zM377 162h1v5h-1zM378 162h1v5h-1zM379 162h1v5h-1zM380 162h1v5h-1zM381 162h1v5h-1zM382 162h1v9h-1zM383 158h1v9h-1zM384 162h1v5h-1zM385 162h1v5h-1zM386 160h1v7h-1zM387 162h1v7h-1zM388 162h1v7h-1zM389 162h1v5h-1zM390 160h1v7h-1zM391 162h1v5h-1zM392 162h1v5h-1zM393 162h1v7h-1zM394 162h1v7h-1zM395 162h1v7h-1zM396 160h1v7h-1zM397 160h1v7h-1zM398 162h1v7h-1zM399 158h1v9h-1zM400 162h1v7h-1zM401 160h1v9h-1zM402 162h1v5h-1zM403 162h1v5h-1zM404 162h1v5h-1zM405 162h1v7h-1zM406 162h1v7h-1z"/>
<path fill="#00ff00" d="M407 144h1v8h-1zM408 144h1v8h-1zM409 144h1v8h-1zM410 144h1v8h-1zM411 142h1v12h-1zM412 144h1v8h-1zM413 144h1v8h-1zM414 144h1v8h-1zM415 144h1v10h-1zM416 144h1v10h-1zM417 142h1v10h-1zM418 144h1v8h-1zM419 146h1v10h-1zM420 146h1v10h-1zM421 146h1v10h-1zM422 144h1v8h-1zM423 144h1v8h-1zM424 142h1v10h-1zM425 142h1v10h-1zM426 142h1v10h-1zM427 144h1v8h-1zM428 144h1v8h-1zM429 144h1v8h-1zM430 142h1v10h-1zM431 142h1v8h-1zM432 142h1v8h-1zM433 144h1v8h-1zM434 142h1v10h-1zM435 142h1v10h-1zM436 142h1v10h-1zM437 146h1v6h-1zM438 142h1v10h-1zM439 142h1v10h-1zM440 146h1v8h-1zM441 146h1v8h-1zM442 146h1v8h-1zM443 144h1v12h-1zM444 142h1v8h-1zM445 142h1v8h-1zM446 144h1v10h-1zM447 144h1v8h-1zM448 142h1v12h-1zM449 142h1v12h-1zM450 142h1v12h-1zM451 142h1v12h-1zM452 144h1v6h-1zM453 142h1v10h-1zM454 142h1v10h-1zM455 144h1v8h-1zM456 146h1v6h-1zM457 144h1v12h-1zM458 142h1v12h-1zM459 142h1v12h-1zM460 142h1v12h-1zM461 144h1v10h-1zM462 146h1v6h-1zM463 144h1v12h-1zM464 140h1v12h-1zM465 142h1v10h-1zM466 144h1v8h-1zM467 144h1v10h-1zM468 144h1v6h-1zM469 144h1v8h-1zM470 144h1v8h-1zM471 146h1v6h-1zM472 144h1v10h-1zM473 144h1v8h-1zM474 142h1v8h-1zM475 142h1v8h-1zM476 144h1v8h-1zM477 144h1v8h-1zM478 144h1v8h-1zM479 144h1v8h-1zM480 142h1v10h-1zM481 144h1v6h-1zM482 144h1v6h-1zM483 142h1v10h-1zM484 144h1v6h-1zM485 146h1v8h-1zM486 144h1v8h-1zM487 144h1v8h-1zM488 144h1v10h-1zM489 144h1v8h-1zM490 144h1v8h-1zM491 144h1v8h-1zM492 144h1v8h-1zM493 144h1v8h-1zM494 144h1v8h-1zM495 144h1v8h-1zM496 144h1v8h-1zM497 142h1v10h-1zM498 142h1v10h-1zM499 146h1v6h-1zM500 146h1v6h-1zM501 146h1v6h-1zM502 146h1v6h-1zM503 146h1v6h-1zM504 146h1v6h-1zM505 146h1v8h-1zM506 144h1v10h-1zM507 146h1v6h-1zM508 146h1v6h-1zM509 146h1v6h-1zM510 146h1v6h-1zM511 146h1v6h-1zM512 146h1v4h-1zM513 146h1v4h-1zM514 146h1v4h-1zM515 142h1v10h-1zM516 144h1v8h-1zM517 144h1v8h-1zM518 144h1v8h-1zM519 144h1v8h-1zM520 144h1v8h-1zM521 144h1v8h-1zM522 144h1v6h-1zM523 146h1v6h-1zM524 144h1v10h-1zM525 144h1v10h-1zM526 142h1v10h-1zM527 144h1v6h-1zM528 146h1v8h-1zM529 146h1v8h-1zM530 144h1v8h-1zM531 146h1v6h-1zM532 144h1v6h-1zM533 144h1v8h-1zM534 144h1v8h-1zM535 144h1v8h-1zM536 144h1v8h-1zM537 142h1v12h-1zM538 142h1v12h-1zM539 142h1v12h-1zM540 144h1v10h-1zM541 144h1v10h-1zM542 144h1v10h-1zM543 142h1v8h-1zM544 144h1v8h-1zM545 144h1v8h-1zM546 146h1v6h-1zM547 144h1v8h-1zM548 144h1v8h-1zM549 144h1v8h-1zM550 144h1v8h-1zM551 144h1v8h-1zM552 144h1v8h-1zM553 144h1v8h-1zM554 144h1v8h-1zM555 144h1v8h-1zM556 144h1v8h-1zM557 144h1v8h-1zM558 144h1v8h-1zM559 144h1v8h-1zM560 144h1v8h-1zM561 146h1v6h-1zM562 146h1v6h-1zM563 146h1v6h-1zM564 146h1v6h-1zM565 144h1v8h-1zM566 140h1v10h-1zM567 140h1v10h-1zM568 144h1v10h-1zM569 146h1v8h-1zM570 142h1v10h-1zM571 146h1v8h-1zM572 144h1v10h-1zM573 142h1v8h-1zM574 142h1v8h-1zM575 144h1v6h-1zM576 144h1v6h-1zM577 144h1v6h-1zM578 144h1v10h-1zM579 144h1v8h-1zM580 142h1v10h-1zM581 142h1v10h-1zM582 142h1v10h-1zM583 142h1v8h-1zM584 142h1v8h-1zM585 144h1v6h-1zM586 144h1v6h-1zM587 144h1v8h-1zM588 144h1v8h-1zM589 144h1v8h-1zM590 144h1v8h-1zM591 144h1v6h-1zM592 144h1v6h-1zM593 144h1v6h-1zM594 144h1v6h-1zM595 144h1v10h-1zM596 142h1v10h-1zM597 142h1v10h-1zM598 144h1v8h-1zM599 142h1v12h-1zM600 142h1v12h-1zM601 142h1v12h-1zM602 144h1v10h-1zM603 144h1v8h-1zM604 146h1v8h-1zM605 144h1v8h-1zM606 144h1v6h-1zM607 144h1v6h-1zM608 146h1v10h-1zM609 144h1v8h-1zM610 144h1v8h-1zM611 144h1v10h-1zM612 142h1v12h-1zM613 142h1v12h-1zM614 146h1v6h-1zM615 144h1v6h-1zM616 146h1v6h-1zM617 144h1v8h-1zM618 144h1v6h-1zM619 142h1v8h-1zM620 146h1v6h-1zM621 146h1v6h-1zM622 144h1v8h-1zM623 142h1v10h-1zM624 142h1v10h-1zM625 142h1v10h-1zM626 142h1v10h-1zM627 142h1v10h-1zM628 144h1v8h-1zM629 144h1v8h-1zM630 144h1v8h-1zM631 144h1v8h-1zM632 144h1v8h-1zM633 144h1v8h-1zM634 146h1v6h-1zM635 144h1v8h-1zM636 146h1v6h-1zM637 144h1v8h-1zM638 142h1v10h-1zM639 144h1v8h-1zM640 144h1v8h-1zM641 144h1v8h-1zM642 144h1v10h-1zM643 146h1v8h-1zM644 146h1v8h-1zM645 146h1v8h-1zM646 146h1v6h-1zM647 144h1v10h-1zM648 144h1v10h-1zM649 144h1v10h-1zM650 142h1v14h-1zM651 142h1v14h-1zM652 140h1v12h-1zM653 140h1v12h-1zM654 142h1v12h-1zM655 142h1v10h-1zM407 146h1v19h-1z"/>
<!-- logo -->
<g fill="#ffff00" shape-rendering="crispEdges">
<rect x="17" y="7" width="3" height="14"/><rect x="25" y="7" width="3" height="14"/><rect x="20" y="12" width="5" height="3"/>
<rect x="31" y="10" width="12" height="3"/><rect x="40" y="10" width="4" height="11"/><rect x="31" y="14" width="12" height="2"/><rect x="31" y="14" width="3" height="7"/><rect x="31" y="18" width="13" height="3"/>
<rect x="45" y="10" width="4" height="11"/><rect x="45" y="10" width="12" height="3"/><rect x="53" y="10" width="4" height="11"/>
<rect x="60" y="7" width="3" height="14"/><rect x="60" y="10" width="9" height="3"/><rect x="60" y="18" width="10" height="3"/>
<rect x="70" y="10" width="11" height="3"/><rect x="78" y="10" width="3" height="6"/><rect x="70" y="14" width="11" height="2"/><rect x="70" y="10" width="3" height="11"/><rect x="70" y="18" width="13" height="3"/>
<rect x="84" y="7" width="3" height="14"/>
</g>
<path d="M87.5 14.5 L93.5 10.8 M87.5 14.5 L94 19.5" stroke="#ffff00" stroke-width="3.2" fill="none" shape-rendering="auto"/>
<!-- icons -->
<g shape-rendering="auto">
<rect x="115.5" y="3.5" width="22" height="20" fill="#000" stroke="#a8a8a8" stroke-width="1.2"/>
<path d="M116.5 9.33 L117.0 8.36 L117.5 7.43 L118.0 6.63 L118.5 6.03 L119.0 5.70 L119.5 5.67 L120.0 5.95 L120.5 6.49 L121.0 7.26 L121.5 8.17 L122.0 9.14 L122.5 10.07 L123.0 10.87 L123.5 11.47 L124.0 11.80 L124.5 11.83 L125.0 11.55 L125.5 11.01 L126.0 10.24 L126.5 9.33 L127.0 8.36 L127.5 7.43 L128.0 6.63 L128.5 6.03 L129.0 5.70 L129.5 5.67 L130.0 5.95 L130.5 6.49 L131.0 7.26 L131.5 8.17 L132.0 9.14 L132.5 10.07 L133.0 10.87 L133.5 11.47 L134.0 11.80 L134.5 11.83 L135.0 11.55 L135.5 11.01 L136.0 10.24 L136.5 9.33 L137.0 8.36" fill="none" stroke="#ffff00" stroke-width="2.4"/>
<path d="M116.5 18.26 L117.0 17.32 L117.5 16.42 L118.0 15.65 L118.5 15.07 L119.0 14.75 L119.5 14.72 L120.0 14.99 L120.5 15.51 L121.0 16.25 L121.5 17.14 L122.0 18.08 L122.5 18.98 L123.0 19.75 L123.5 20.33 L124.0 20.65 L124.5 20.68 L125.0 20.41 L125.5 19.89 L126.0 19.15 L126.5 18.26 L127.0 17.32 L127.5 16.42 L128.0 15.65 L128.5 15.07 L129.0 14.75 L129.5 14.72 L130.0 14.99 L130.5 15.51 L131.0 16.25 L131.5 17.14 L132.0 18.08 L132.5 18.98 L133.0 19.75 L133.5 20.33 L134.0 20.65 L134.5 20.68 L135.0 20.41 L135.5 19.89 L136.0 19.15 L136.5 18.26 L137.0 17.32" fill="none" stroke="#00ffff" stroke-width="2.4"/>
<rect x="140.5" y="3.5" width="22" height="20" fill="#000" stroke="#a8a8a8" stroke-width="1.2"/>
<path d="M144.5 20 L159 5.8" stroke="#00ff00" stroke-width="2.6" stroke-linecap="round"/>
<rect x="165.5" y="3.5" width="22" height="20" fill="#000" stroke="#a8a8a8" stroke-width="1.2"/>
<g filter="url(#blur1)" fill="#a0a0a0">
<rect x="173" y="5.5" width="11" height="9.5" rx="2"/><rect x="182" y="9" width="3" height="5"/><rect x="168.5" y="12.5" width="11" height="9.5" rx="2"/>
</g>
<path d="M171.5 15 V21 M174.5 14 V21 M177 15 V21 M176.5 7 V14 M180 7 V13" stroke="#7a7a7a" stroke-width="0.8" fill="none" shape-rendering="auto"/>
<path d="M191 24 Q190.5 24 190.5 22 L190.5 5 Q190.5 2.5 193 2.5 L233 2.5" fill="none" stroke="#3a3838" stroke-width="1.2"/>
<path d="M245 5h11v2h-9v16h-2z M254 7h2v16h-2z" fill="#d0ffff" shape-rendering="crispEdges"/>
<path d="M247 3h1v6h-1z M249 3h1v6h-1z M251 3h1v6h-1z M253 3h1v6h-1z M241 20h4v2h-4z M243 17h1v6h-1z M241 19h1v4h-1z M256 20h7v2h-7z M257 17h1v6h-1z M259 17h1v6h-1z M261 17h1v6h-1z" fill="#d0ffff" shape-rendering="crispEdges"/>
</g>
<rect x="268" y="5" width="14" height="3" fill="#00ff00"/>
<rect x="273" y="5" width="4" height="17" fill="#00ff00"/>
<g fill="#3c3e3a">
<rect x="290" y="12" width="17" height="4"/>
<rect x="293" y="16" width="3" height="3"/><rect x="297" y="16" width="3" height="3"/><rect x="301" y="16" width="3" height="2"/>
<path d="M306 10h6v1h1v9h-1v1h-6v-1h-1v-9h1z M308 12v6h3v-6z" fill-rule="evenodd"/>
</g>
<g shape-rendering="crispEdges">
<path fill="#6050e0" d="M315 3h1v17h-1z M334 4h1v18h-1z M320 11h12v1h-12z M317 21h1v1h-1z"/>
<path fill="#b8f0e8" d="M316 3h20v1h-20z M335 3h1v20h-1z M318 22h18v1h-18z M316 4h1v16h-1z M317 20h1v1h-1z M319 3h1v10h-1z M332 3h1v10h-1z M319 12h14v1h-14z M321 15h10v1h-10z M321 15h1v7h-1z M330 15h1v7h-1z"/>
<path fill="#2818a8" d="M321 5h1v6h-1z M323 16h1v5h-1z"/>
<rect x="325" y="16" width="5" height="6" fill="#d0fff8"/>
</g>
<g fill="none" stroke="#3c3e3a" stroke-width="1.5" shape-rendering="auto">
<path d="M345.5 13 V3.5 H357.5 V13"/>
<path d="M348 6.5 H355 M348 9.5 H355"/>
<rect x="341.5" y="13.5" width="20.5" height="9" rx="1.5"/>
<rect x="344.5" y="16.5" width="14.5" height="3"/>
</g>
<rect x="366" y="1" width="2" height="26" fill="#111"/>
<!-- timebase window -->
<rect x="393.5" y="3.5" width="113" height="20.5" fill="#000" stroke="#7272b4" stroke-width="1.3"/>
<path d="M395.5 16 L397 8 L398.5 20 L400 8 L401.5 20 L403 9 M497 16 L498.5 8 L500 20 L501.5 8 L503 20 L504.5 8 L505.5 14" fill="none" stroke="#0e5a5a" stroke-width="1" shape-rendering="auto"/>
<rect x="405" y="4" width="90" height="20" fill="#000" stroke="#ff6818" stroke-width="2"/>
<path d="M406.0 7.71 L406.5 6.58 L407.0 6.79 L407.5 8.28 L408.0 10.79 L408.5 13.81 L409.0 16.77 L409.5 19.11 L410.0 20.36 L410.5 20.29 L411.0 18.92 L411.5 16.50 L412.0 13.50 L412.5 10.50 L413.0 8.08 L413.5 6.71 L414.0 6.64 L414.5 7.89 L415.0 10.23 L415.5 13.19 L416.0 16.21 L416.5 18.72 L417.0 20.21 L417.5 20.42 L418.0 19.29 L418.5 17.04 L419.0 14.12 L419.5 11.07 L420.0 8.50 L420.5 6.88 L421.0 6.54 L421.5 7.54 L422.0 9.69 L422.5 12.57 L423.0 15.63 L423.5 18.28 L424.0 20.01 L424.5 20.48 L425.0 19.61 L425.5 17.56 L426.0 14.73 L426.5 11.66 L427.0 8.95 L427.5 7.11 L428.0 6.50 L428.5 7.24 L429.0 9.19 L429.5 11.96 L430.0 15.04 L430.5 17.81 L431.0 19.76 L431.5 20.50 L432.0 19.89 L432.5 18.05 L433.0 15.34 L433.5 12.27 L434.0 9.44 L434.5 7.39 L435.0 6.52 L435.5 6.99 L436.0 8.72 L436.5 11.37 L437.0 14.43 L437.5 17.31 L438.0 19.46 L438.5 20.46 L439.0 20.12 L439.5 18.50 L440.0 15.93 L440.5 12.88 L441.0 9.96 L441.5 7.71 L442.0 6.58 L442.5 6.79 L443.0 8.28 L443.5 10.79 L444.0 13.81 L444.5 16.77 L445.0 19.11 L445.5 20.36 L446.0 20.29 L446.5 18.92 L447.0 16.50 L447.5 13.50 L448.0 10.50 L448.5 8.08 L449.0 6.71 L449.5 6.64 L450.0 7.89 L450.5 10.23 L451.0 13.19 L451.5 16.21 L452.0 18.72 L452.5 20.21 L453.0 20.42 L453.5 19.29 L454.0 17.04 L454.5 14.12 L455.0 11.07 L455.5 8.50 L456.0 6.88 L456.5 6.54 L457.0 7.54 L457.5 9.69 L458.0 12.57 L458.5 15.63 L459.0 18.28 L459.5 20.01 L460.0 20.48 L460.5 19.61 L461.0 17.56 L461.5 14.73 L462.0 11.66 L462.5 8.95 L463.0 7.11 L463.5 6.50 L464.0 7.24 L464.5 9.19 L465.0 11.96 L465.5 15.04 L466.0 17.81 L466.5 19.76 L467.0 20.50 L467.5 19.89 L468.0 18.05 L468.5 15.34 L469.0 12.27 L469.5 9.44 L470.0 7.39 L470.5 6.52 L471.0 6.99 L471.5 8.72 L472.0 11.37 L472.5 14.43 L473.0 17.31 L473.5 19.46 L474.0 20.46 L474.5 20.12 L475.0 18.50 L475.5 15.93 L476.0 12.88 L476.5 9.96 L477.0 7.71 L477.5 6.58 L478.0 6.79 L478.5 8.28 L479.0 10.79 L479.5 13.81 L480.0 16.77 L480.5 19.11 L481.0 20.36 L481.5 20.29 L482.0 18.92 L482.5 16.50 L483.0 13.50 L483.5 10.50 L484.0 8.08 L484.5 6.71 L485.0 6.64 L485.5 7.89 L486.0 10.23 L486.5 13.19 L487.0 16.21 L487.5 18.72 L488.0 20.21 L488.5 20.42 L489.0 19.29 L489.5 17.04 L490.0 14.12 L490.5 11.07 L491.0 8.50 L491.5 6.88 L492.0 6.54 L492.5 7.54 L493.0 9.69" fill="none" stroke="#00ffff" stroke-width="1.9" shape-rendering="auto"/>
<!-- W box -->
<rect x="521.5" y="3.5" width="21" height="20.5" fill="#000" stroke="#b0b0b0" stroke-width="1"/>
<!-- blue tab -->
<path d="M300 29 H370 V41 L367 44.5 H341 L335.5 51 L330 44.5 H303 L300 41 Z" fill="#3d6ef2" stroke="#9ccff5" stroke-width="1" shape-rendering="auto"/>
<!-- X box -->
<rect x="777" y="3" width="21" height="21" fill="#ff3000"/>
<path d="M781.8 6.3 L793.2 19.2 M793.2 6.3 L781.8 19.2" stroke="#fff" stroke-width="2.6" stroke-linecap="round" shape-rendering="auto"/>
<!-- trigger level marker right -->
<path d="M656 128 L642 136.5 L656 145 Z" fill="#ffff00" shape-rendering="auto"/>
<!-- ch marker left -->
<path d="M0 234 H9 L15 240 L9 247 H0 Z" fill="#ff1800" shape-rendering="auto"/>
<path d="M0 232 H9 L15 238.5 L9 245 H0 Z" fill="#00ff00" shape-rendering="auto"/>
<!-- falling edge icon -->
<path d="M453 455.5 H459 L465.5 472 H471" fill="none" stroke="#8ec8ff" stroke-width="2" shape-rendering="auto"/>
<!-- buttons -->
<g fill="none" stroke-width="1" shape-rendering="auto">
<path stroke="#d4d4d4" d="M676.5 105.5 L673.5 102.5 V67.5 L676.5 64.5 H778.5"/>
<path stroke="#1e1e1e" d="M778.5 64.5 L782.5 67.5 V102.5 L779.5 105.5 H676.5"/>
<path stroke="#d4d4d4" d="M676.5 186.5 L673.5 183.5 V148.5 L676.5 145.5 H778.5"/>
<path stroke="#1e1e1e" d="M778.5 145.5 L782.5 148.5 V183.5 L779.5 186.5 H676.5"/>
<path stroke="#d4d4d4" d="M676.5 262.5 L673.5 259.5 V224.5 L676.5 221.5 H778.5"/>
<path stroke="#1e1e1e" d="M778.5 221.5 L782.5 224.5 V259.5 L779.5 262.5 H676.5"/>
<path stroke="#d4d4d4" d="M676.5 346.5 L673.5 343.5 V308.5 L676.5 305.5 H778.5"/>
<path stroke="#1e1e1e" d="M778.5 305.5 L782.5 308.5 V343.5 L779.5 346.5 H676.5"/>
<path stroke="#d4d4d4" d="M681.5 472.5 L678.5 469.5 V451.5 L681.5 448.5 H773.5"/>
<path stroke="#1e1e1e" d="M773.5 448.5 L777.5 451.5 V469.5 L774.5 472.5 H681.5"/>
</g>
<rect x="657" y="0" width="143" height="1" fill="#a4a4a4"/>

</svg>
<div class="pill" style="left:48px;top:453px;width:62px;height:22px"></div>
<div class="pill" style="left:148px;top:453px;width:62px;height:22px"></div>
<div class="pill" style="left:248px;top:453px;width:62px;height:22px"></div>
<div class="pill" style="left:348px;top:453px;width:62px;height:22px"></div>
<div class="pill" style="left:473px;top:453px;width:70px;height:22px"></div>
<div class="pill" style="left:550px;top:453px;width:100px;height:22px"></div>
<div class="pill" style="left:547px;top:3px;width:99px;height:21px;border-radius:10.5px"></div>
<div class="t" style="left:312.06px;top:30px;font-size:16.57px;-webkit-text-stroke:0.3px #3d6ef2;transform:scaleX(0.9375);color:#fff">0.000s</div>
<div class="t" style="left:573.0px;top:6px;font-size:18.52px;-webkit-text-stroke:0.3px #000;transform:scaleX(0.96);color:#fff">400us</div>
<div class="t" style="left:678.08px;top:3px;font-size:22.02px;transform:scaleX(0.962);color:#fff">UTILITY</div>
<div class="t" style="left:699.12px;top:69px;font-size:18.52px;letter-spacing:1px;-webkit-text-stroke:0.3px #757575;transform:scaleX(0.8769);color:#fff">System</div>
<div class="t" style="left:701.07px;top:87px;font-size:18.52px;letter-spacing:1px;-webkit-text-stroke:0.3px #757575;transform:scaleX(0.9286);color:#fff">Status</div>
<div class="t" style="left:699.11px;top:150px;font-size:18.52px;letter-spacing:1px;-webkit-text-stroke:0.3px #757575;transform:scaleX(0.8889);color:#fff">Update</div>
<div class="t" style="left:691.25px;top:168px;font-size:18.52px;letter-spacing:1px;-webkit-text-stroke:0.3px #757575;transform:scaleX(0.8765);color:#fff">Firmware</div>
<div class="t" style="left:709.16px;top:226px;font-size:18.52px;letter-spacing:1px;-webkit-text-stroke:0.3px #757575;transform:scaleX(0.8409);color:#fff">Save</div>
<div class="t" style="left:690.0px;top:244px;font-size:18.52px;letter-spacing:1px;-webkit-text-stroke:0.3px #757575;transform:scaleX(0.8444);color:#fff">Waveform</div>
<div class="t" style="left:680.2px;top:318px;font-size:18.52px;letter-spacing:1px;-webkit-text-stroke:0.3px #757575;transform:scaleX(0.9);color:#fff">Do Self Cal</div>
<div class="t" style="left:691.37px;top:452px;font-size:20.35px;letter-spacing:1px;-webkit-text-stroke:0.3px #757575;transform:scaleX(0.814);color:#fff">Page 1/4</div>
<div class="t" style="left:15.17px;top:456px;font-size:18.52px;-webkit-text-stroke:0.3px #555753;transform:scaleX(0.8286);color:#ffff00">CH1</div>
<div class="t" style="left:60.17px;top:458px;font-size:18.52px;-webkit-text-stroke:0.3px #000;transform:scaleX(0.8298);color:#ffff00">1.00V</div>
<div class="t" style="left:115.09px;top:456px;font-size:18.52px;-webkit-text-stroke:0.3px #555753;transform:scaleX(0.9143);color:#00ffff">CH2</div>
<div class="t" style="left:160.17px;top:458px;font-size:18.52px;-webkit-text-stroke:0.3px #000;transform:scaleX(0.8298);color:#00ffff">1.00V</div>
<div class="t" style="left:215.09px;top:456px;font-size:18.52px;-webkit-text-stroke:0.3px #555753;transform:scaleX(0.9143);color:#ff1800">CH3</div>
<div class="t" style="left:260.17px;top:458px;font-size:18.52px;-webkit-text-stroke:0.3px #000;transform:scaleX(0.8298);color:#ff1800">1.00V</div>
<div class="t" style="left:315.11px;top:456px;font-size:18.52px;-webkit-text-stroke:0.3px #555753;transform:scaleX(0.8889);color:#00ff00">CH4</div>
<div class="t" style="left:360.17px;top:458px;font-size:18.52px;-webkit-text-stroke:0.3px #000;transform:scaleX(0.8298);color:#00ff00">1.00V</div>
<div class="t" style="left:418.17px;top:456px;font-size:18.52px;-webkit-text-stroke:0.3px #555753;transform:scaleX(0.8286);color:#ffff00">CH1</div>
<div class="t" style="left:487.15px;top:456px;font-size:18.52px;-webkit-text-stroke:0.3px #000;transform:scaleX(0.8511);color:#ffff00">2.04V</div>
<div class="t" style="left:523.0px;top:4px;font-size:22.02px;font-weight:bold;transform:scaleX(0.8571);color:#d8ffff">W</div>
<div class="t" style="left:2.0px;top:232px;font-size:14.68px;font-weight:bold;transform:scaleX(0.875);color:#2040e8">4</div>
<div class="t" style="left:564.05px;top:458px;font-size:16.57px;-webkit-text-stroke:0.3px #000;transform:scaleX(0.9487);color:#ffff00">10.0000Hz</div>
</body></html>
